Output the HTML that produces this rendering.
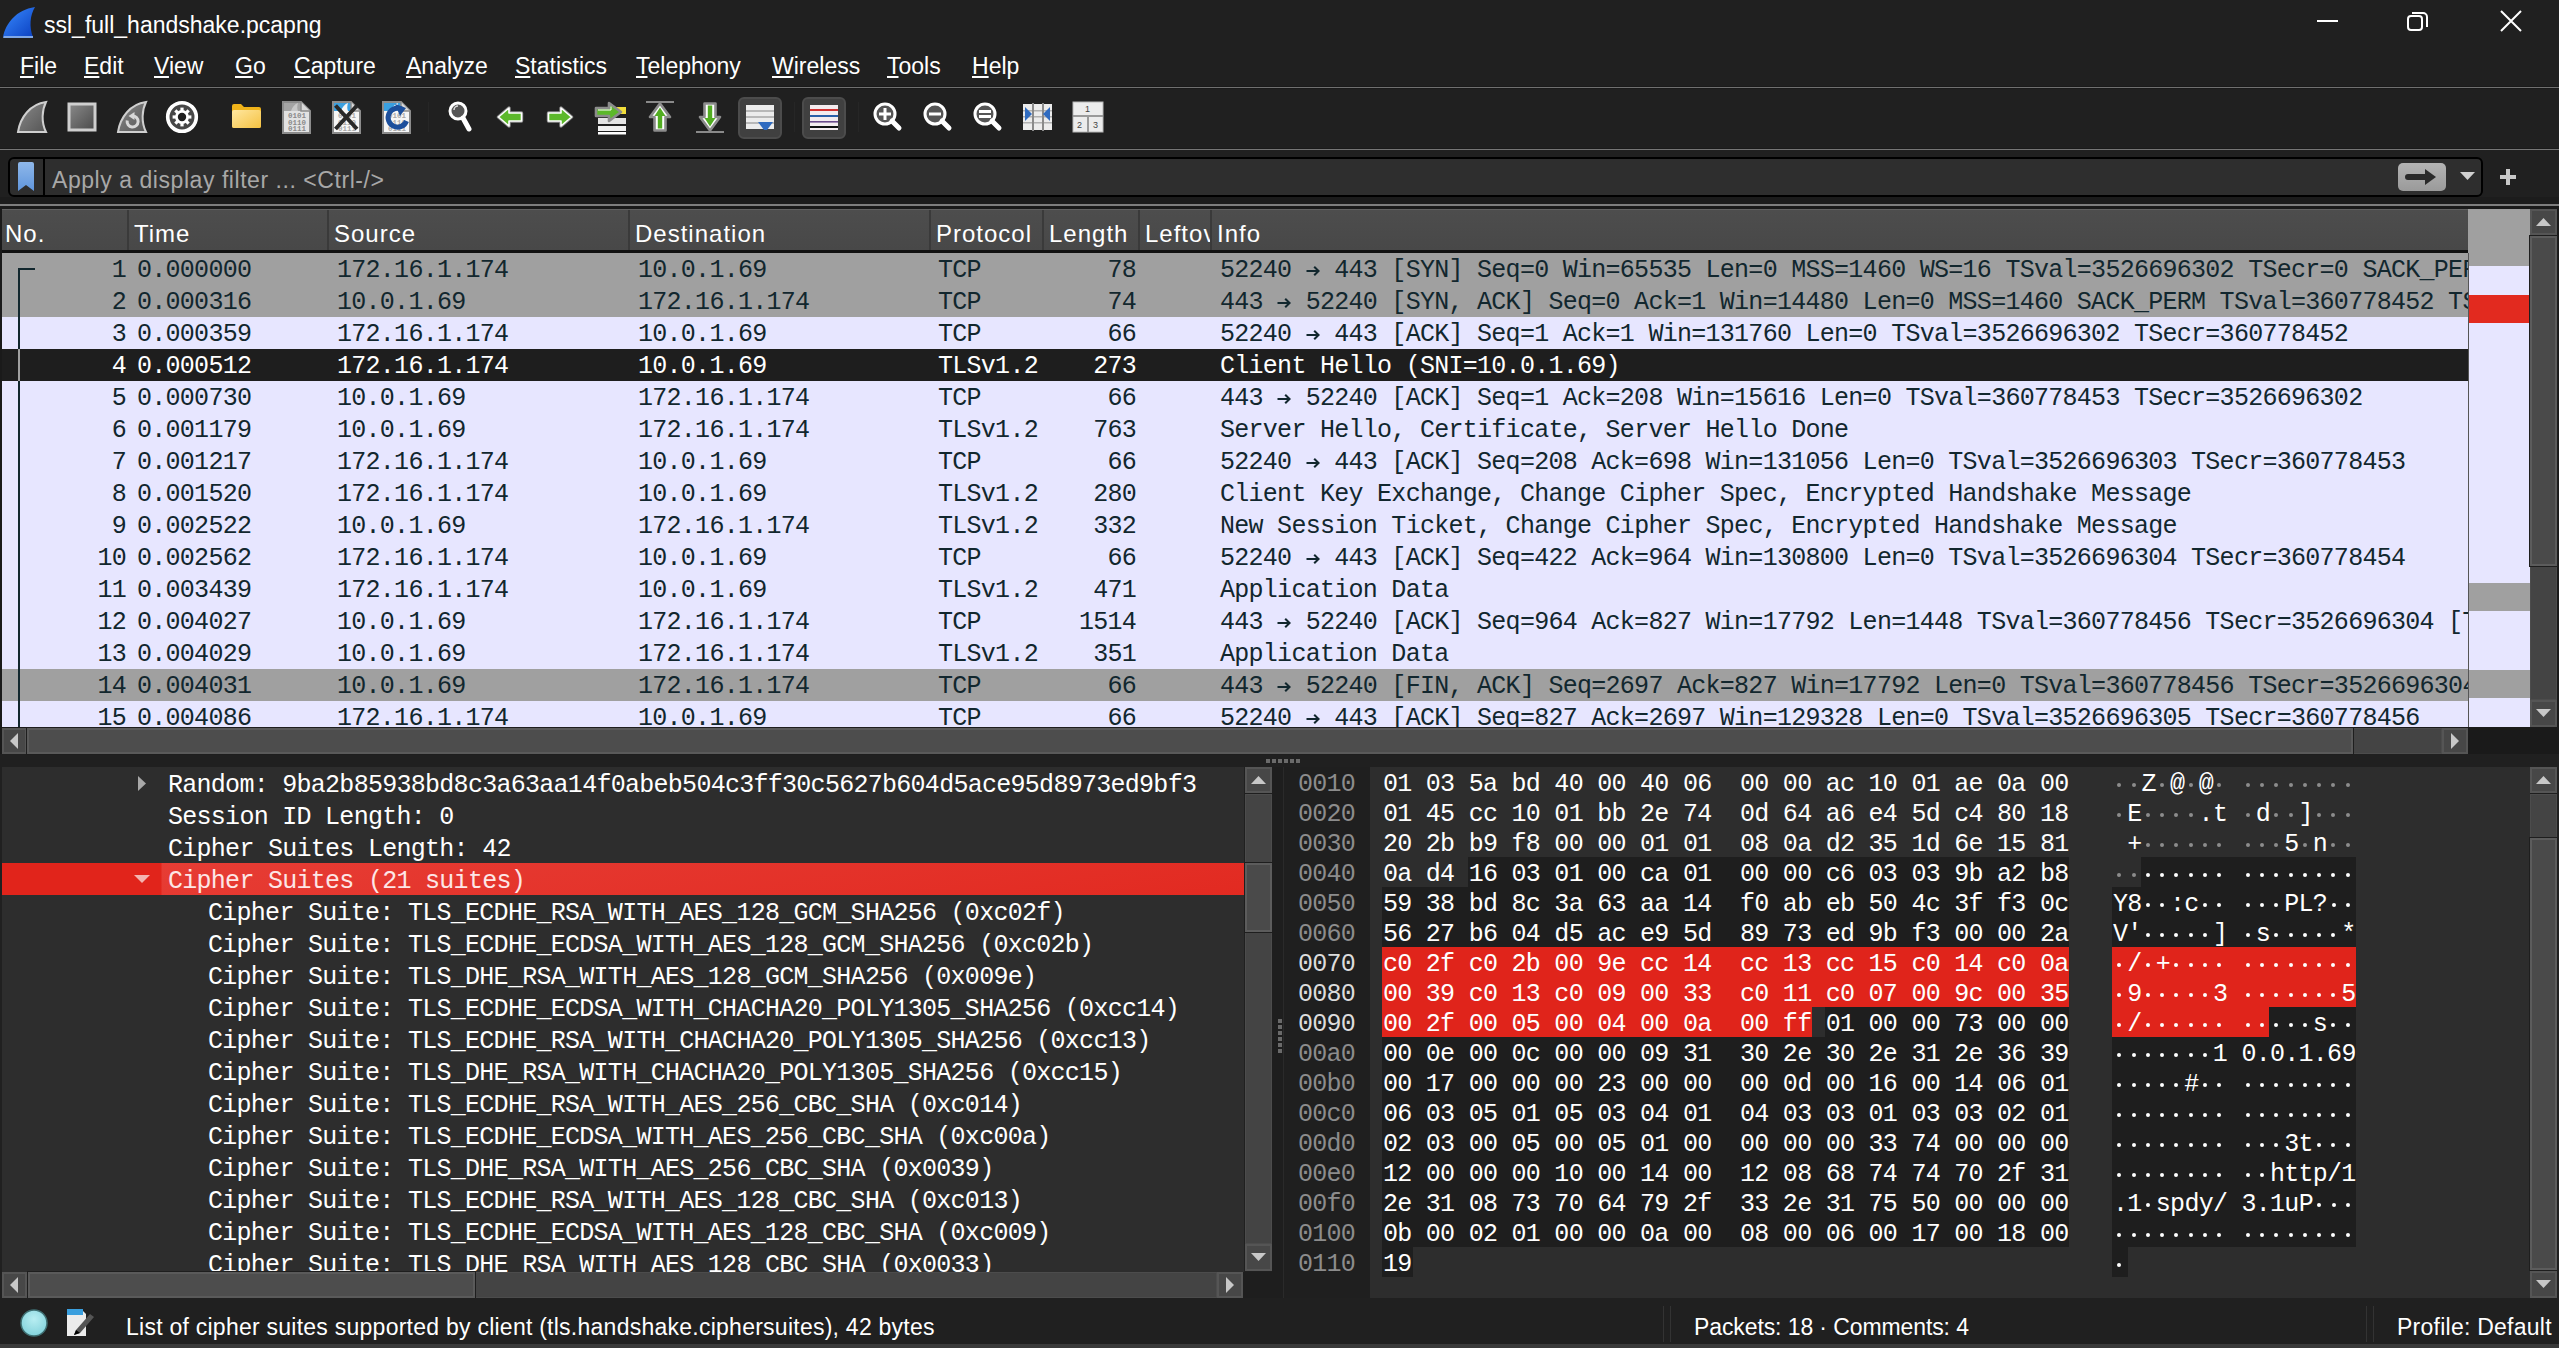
<!DOCTYPE html><html><head><meta charset="utf-8"><title>ssl_full_handshake.pcapng</title>
<style>
*{box-sizing:border-box}
html,body{margin:0;padding:0;width:2559px;height:1348px;overflow:hidden;background:#202020}
body{position:relative;font-family:'Liberation Sans',sans-serif;color:#fff}
.abs{position:absolute}
.m{font-family:'Liberation Mono',monospace;font-size:25px;letter-spacing:-0.722px;white-space:pre;position:absolute}
.s{font-family:'Liberation Sans',sans-serif;font-size:23px;white-space:pre;position:absolute}
.d{display:inline-block;width:14.28px;height:0;position:relative}
.d::after{content:'';position:absolute;left:4.4px;top:-8.2px;width:4px;height:4px;border-radius:50%;background:currentColor}
.u{text-decoration:underline;text-underline-offset:2px;text-decoration-thickness:2px}
</style></head><body>

<svg class="abs" style="left:2px;top:5px" width="34" height="34" viewBox="0 0 34 34">
<defs><linearGradient id="fin" x1="0" y1="0" x2="1" y2="1"><stop offset="0" stop-color="#3a8cff"/><stop offset="1" stop-color="#0a3fc0"/></linearGradient></defs>
<path d="M1 32 C4 18 14 5 33 2 C28 10 27 22 31 32 Z" fill="url(#fin)"/>
<path d="M2 31 L31 31 L31 33 L1 33 Z" fill="#7fa8e8"/>
</svg>
<div class="s" style="left:44px;top:9px;line-height:32px;font-size:23px;color:#fff">ssl_full_handshake.pcapng</div>
<div class="abs" style="left:2317px;top:20px;width:21px;height:2px;background:#fff"></div>
<svg class="abs" style="left:2406px;top:10px" width="24" height="23" viewBox="0 0 24 23">
<rect x="2" y="6" width="14" height="14" rx="3" fill="none" stroke="#fff" stroke-width="2"/>
<path d="M6 3 H17 a4 4 0 0 1 4 4 V17" fill="none" stroke="#fff" stroke-width="2"/></svg>
<svg class="abs" style="left:2500px;top:10px" width="23" height="23" viewBox="0 0 23 23">
<path d="M1 1 L21 21 M21 1 L1 21" stroke="#fff" stroke-width="2"/></svg>
<div class="s" style="left:20px;top:50px;line-height:32px;color:#fff"><span class="u">F</span>ile</div>
<div class="s" style="left:84px;top:50px;line-height:32px;color:#fff"><span class="u">E</span>dit</div>
<div class="s" style="left:154px;top:50px;line-height:32px;color:#fff"><span class="u">V</span>iew</div>
<div class="s" style="left:235px;top:50px;line-height:32px;color:#fff"><span class="u">G</span>o</div>
<div class="s" style="left:294px;top:50px;line-height:32px;color:#fff"><span class="u">C</span>apture</div>
<div class="s" style="left:406px;top:50px;line-height:32px;color:#fff"><span class="u">A</span>nalyze</div>
<div class="s" style="left:515px;top:50px;line-height:32px;color:#fff"><span class="u">S</span>tatistics</div>
<div class="s" style="left:636px;top:50px;line-height:32px;color:#fff"><span class="u">T</span>elephony</div>
<div class="s" style="left:772px;top:50px;line-height:32px;color:#fff"><span class="u">W</span>ireless</div>
<div class="s" style="left:887px;top:50px;line-height:32px;color:#fff"><span class="u">T</span>ools</div>
<div class="s" style="left:972px;top:50px;line-height:32px;color:#fff"><span class="u">H</span>elp</div>
<div class="abs" style="left:0;top:86px;width:2559px;height:1px;background:#1a1a1a"></div><div class="abs" style="left:0;top:87px;width:2559px;height:1px;background:#707070"></div><div class="abs" style="left:0;top:88px;width:2559px;height:1px;background:#1a1a1a"></div>
<svg class="abs" style="left:16px;top:100px" width="32" height="34" viewBox="0 0 32 34"><defs><linearGradient id="g1" x1="0" y1="0" x2="1" y2="1"><stop offset="0" stop-color="#8a8a8a"/><stop offset="1" stop-color="#555"/></linearGradient></defs><path d="M2 32 C4 18 14 4 30 2 C26 10 25 22 30 32 Z" fill="url(#g1)" stroke="#cfcfcf" stroke-width="2"/></svg>
<svg class="abs" style="left:67px;top:102px" width="30" height="30" viewBox="0 0 30 30"><defs><linearGradient id="g2" x1="0" y1="0" x2="1" y2="1"><stop offset="0" stop-color="#8a8a8a"/><stop offset="1" stop-color="#4a4a4a"/></linearGradient></defs><rect x="2" y="2" width="26" height="26" fill="url(#g2)" stroke="#cfcfcf" stroke-width="3"/></svg>
<svg class="abs" style="left:116px;top:100px" width="32" height="34" viewBox="0 0 32 34"><path d="M2 32 C4 18 14 4 30 2 C26 10 25 22 30 32 Z" fill="url(#g1)" stroke="#cfcfcf" stroke-width="2"/><path d="M16.5 16 A5.5 5.5 0 1 1 11.2 20.5" fill="none" stroke="#d8d8d8" stroke-width="3"/><path d="M18.5 12 L18.5 20 L12.5 16 Z" fill="#d8d8d8"/></svg>
<svg class="abs" style="left:165px;top:100px" width="34" height="34" viewBox="0 0 34 34"><circle cx="17" cy="17" r="14.3" fill="#474747" stroke="#fff" stroke-width="3.6"/><g fill="#fff"><rect x="15.4" y="7.6" width="3.2" height="3.4" transform="rotate(0 17 17)"/><rect x="15.4" y="7.6" width="3.2" height="3.4" transform="rotate(45 17 17)"/><rect x="15.4" y="7.6" width="3.2" height="3.4" transform="rotate(90 17 17)"/><rect x="15.4" y="7.6" width="3.2" height="3.4" transform="rotate(135 17 17)"/><rect x="15.4" y="7.6" width="3.2" height="3.4" transform="rotate(180 17 17)"/><rect x="15.4" y="7.6" width="3.2" height="3.4" transform="rotate(225 17 17)"/><rect x="15.4" y="7.6" width="3.2" height="3.4" transform="rotate(270 17 17)"/><rect x="15.4" y="7.6" width="3.2" height="3.4" transform="rotate(315 17 17)"/></g><circle cx="17" cy="17" r="6.9" fill="#fff"/><circle cx="17" cy="17" r="4.2" fill="#1e1e1e"/></svg>
<svg class="abs" style="left:231px;top:103px" width="31" height="26" viewBox="0 0 31 26"><defs><linearGradient id="gf" x1="0" y1="0" x2="1" y2="1"><stop offset="0" stop-color="#ffe7a0"/><stop offset="1" stop-color="#f5c242"/></linearGradient></defs><path d="M1 3 a2 2 0 0 1 2-2 H10 L13 4 H28 a2 2 0 0 1 2 2 V23 a2 2 0 0 1-2 2 H3 a2 2 0 0 1-2-2Z" fill="#f0b31a"/><rect x="1" y="7" width="29" height="18" rx="2" fill="url(#gf)"/></svg>
<svg class="abs" style="left:281px;top:100px" width="30" height="34" viewBox="0 0 30 34"><path d="M2 2 H20 L29 11 V33 H2 Z" fill="#e2e2e2" stroke="#8c8c8c" stroke-width="2"/><rect x="3" y="3" width="17" height="8" fill="#a4a4a4"/><path d="M10 11 C11 7 14 4 17 3 C16 6 16 9 17 11Z" fill="#c8c8c8"/><path d="M20 2 V11 H29" fill="#d8d8d8" stroke="#8c8c8c" stroke-width="1.5"/><g font-family="Liberation Mono" font-size="7.5" font-weight="bold" fill="#8a8a8a"><text x="7" y="18">0101</text><text x="7" y="24.5">0110</text><text x="7" y="31">0111</text></g></svg>
<svg class="abs" style="left:331px;top:100px" width="30" height="34" viewBox="0 0 30 34"><path d="M2 2 H20 L29 11 V33 H2 Z" fill="#f6f6f6" stroke="#8c8c8c" stroke-width="2"/><rect x="3" y="3" width="17" height="8" fill="#3aa0e0"/><path d="M10 11 C11 7 14 4 17 3 C16 6 16 9 17 11Z" fill="#f6f6f6"/><path d="M20 2 V11 H29" fill="#d8d8d8" stroke="#8c8c8c" stroke-width="1.5"/><g font-family="Liberation Mono" font-size="7.5" font-weight="bold" fill="#a8a8a8"><text x="7" y="18">0101</text><text x="7" y="24.5">0110</text><text x="7" y="31">0111</text></g><path d="M4.5 5.5 L26 29 M26 5.5 L4.5 29" stroke="#282828" stroke-width="4"/></svg>
<svg class="abs" style="left:381px;top:100px" width="30" height="34" viewBox="0 0 30 34"><path d="M2 2 H20 L29 11 V33 H2 Z" fill="#f6f6f6" stroke="#8c8c8c" stroke-width="2"/><rect x="3" y="3" width="17" height="8" fill="#3aa0e0"/><path d="M10 11 C11 7 14 4 17 3 C16 6 16 9 17 11Z" fill="#f6f6f6"/><path d="M20 2 V11 H29" fill="#d8d8d8" stroke="#8c8c8c" stroke-width="1.5"/><g font-family="Liberation Mono" font-size="7.5" font-weight="bold" fill="#a8a8a8"><text x="7" y="18">0101</text><text x="7" y="24.5">0110</text><text x="7" y="31">0111</text></g><path d="M21.5 9.5 A9.5 9.5 0 1 0 25.5 21" fill="none" stroke="#1c4f9c" stroke-width="5"/><path d="M14 4 L25 8 L19 16 Z" fill="#1c4f9c"/></svg>
<div class="abs" style="left:428px;top:102px;width:1px;height:30px;background:#262626"></div>
<svg class="abs" style="left:447px;top:101px" width="26" height="32" viewBox="0 0 26 32"><circle cx="11" cy="10" r="8" fill="#555" stroke="#fff" stroke-width="3"/><path d="M16 17 L22 28" stroke="#fff" stroke-width="5" stroke-linecap="round"/><path d="M7 9 a4 4 0 0 1 4-4" stroke="#ddd" stroke-width="1.5" fill="none"/></svg>
<svg class="abs" style="left:496px;top:106px" width="28" height="23" viewBox="0 0 28 23"><path d="M2.5 11 L13 2 V7 H25.5 V15 H13 V20 Z" fill="#8c8c8c" stroke="#8c8c8c" stroke-width="3.4" stroke-linejoin="round"/><path d="M2.5 11 L13 2 V7 H25.5 V15 H13 V20 Z" fill="#5cb82a" stroke="#fff" stroke-width="1.6" stroke-linejoin="round"/></svg>
<svg class="abs" style="left:546px;top:106px" width="28" height="23" viewBox="0 0 28 23"><path d="M25.5 11 L15 2 V7 H2.5 V15 H15 V20 Z" fill="#8c8c8c" stroke="#8c8c8c" stroke-width="3.4" stroke-linejoin="round"/><path d="M25.5 11 L15 2 V7 H2.5 V15 H15 V20 Z" fill="#5cb82a" stroke="#fff" stroke-width="1.6" stroke-linejoin="round"/></svg>
<svg class="abs" style="left:594px;top:101px" width="34" height="34" viewBox="0 0 34 34"><rect x="4" y="6" width="28" height="7" fill="#f2de3a"/><rect x="4" y="17" width="28" height="6" fill="#e4e4e4"/><rect x="4" y="25" width="28" height="5" fill="#f0f0f0"/><rect x="4" y="31" width="28" height="2.5" fill="#fff"/><path d="M2 7 H15 V2 L27 11 L15 20 V15 H2 Z" fill="#5cb82a" stroke="#8c8c8c" stroke-width="2.6" stroke-linejoin="round"/><path d="M4 9 H17 V5.5" fill="none" stroke="#fff" stroke-width="1"/></svg>
<svg class="abs" style="left:645px;top:100px" width="30" height="34" viewBox="0 0 30 34"><rect x="1" y="1" width="28" height="2" fill="#8a8a8a"/><path d="M15 3.5 L25 17 H20.5 V30.5 H9.5 V17 H5 Z" fill="#fff" stroke="#8c8c8c" stroke-width="2.6" stroke-linejoin="round"/><path d="M15 7.5 L20.5 16 H17.2 V28.5 H12.8 V16 H9.5 Z" fill="#52ad22"/></svg>
<svg class="abs" style="left:695px;top:100px" width="30" height="34" viewBox="0 0 30 34"><rect x="1" y="31" width="28" height="2" fill="#8a8a8a"/><path d="M15 30.5 L25 17 H20.5 V3.5 H9.5 V17 H5 Z" fill="#fff" stroke="#8c8c8c" stroke-width="2.6" stroke-linejoin="round"/><path d="M15 26.5 L20.5 18 H17.2 V5.5 H12.8 V18 H9.5 Z" fill="#52ad22"/></svg>
<div class="abs" style="left:738px;top:97px;width:44px;height:42px;border-radius:6px;background:#404040;border:2px solid #4c4c4c"></div>
<svg class="abs" style="left:746px;top:105px" width="28" height="25" viewBox="0 0 28 25"><rect x="0" y="0" width="28" height="24" fill="#ececec"/><rect x="0" y="5" width="28" height="2" fill="#b8b8b8"/><rect x="0" y="11" width="28" height="2" fill="#b8b8b8"/><rect x="0" y="17" width="28" height="2" fill="#b8b8b8"/><path d="M12 17 H27 L21 25 H18 Z" fill="#2f6bc0"/></svg>
<div class="abs" style="left:794px;top:102px;width:1px;height:30px;background:#262626"></div>
<div class="abs" style="left:802px;top:97px;width:44px;height:42px;border-radius:6px;background:#404040;border:2px solid #4c4c4c"></div>
<svg class="abs" style="left:810px;top:105px" width="28" height="25" viewBox="0 0 28 25"><rect x="0" y="0" width="28" height="25" fill="#f4ecef"/><rect x="0" y="4" width="28" height="2" fill="#d03030"/><rect x="0" y="10" width="28" height="2" fill="#2a5fa8"/><rect x="0" y="16" width="28" height="1.6" fill="#6a4a8a"/><rect x="0" y="21" width="28" height="2" fill="#111"/></svg>
<div class="abs" style="left:858px;top:102px;width:1px;height:30px;background:#262626"></div>
<svg class="abs" style="left:873px;top:102px" width="30" height="32" viewBox="0 0 30 32"><circle cx="12" cy="12" r="10" fill="#555" stroke="#fff" stroke-width="3"/><path d="M19 19 L26 26" stroke="#fff" stroke-width="5" stroke-linecap="round"/><path d="M12 6 V18 M6 12 H18" stroke="#fff" stroke-width="3"/></svg>
<svg class="abs" style="left:923px;top:102px" width="30" height="32" viewBox="0 0 30 32"><circle cx="12" cy="12" r="10" fill="#555" stroke="#fff" stroke-width="3"/><path d="M19 19 L26 26" stroke="#fff" stroke-width="5" stroke-linecap="round"/><path d="M6 12 H18" stroke="#fff" stroke-width="3"/></svg>
<svg class="abs" style="left:973px;top:102px" width="30" height="32" viewBox="0 0 30 32"><circle cx="12" cy="12" r="10" fill="#555" stroke="#fff" stroke-width="3"/><path d="M19 19 L26 26" stroke="#fff" stroke-width="5" stroke-linecap="round"/><path d="M6 9.5 H18 M6 14.5 H18" stroke="#fff" stroke-width="3"/></svg>
<svg class="abs" style="left:1023px;top:103px" width="30" height="28" viewBox="0 0 30 28"><rect x="0" y="1" width="29" height="26" fill="#ececec"/><rect x="0" y="7" width="29" height="1.5" fill="#b0b0b0"/><rect x="0" y="13" width="29" height="1.5" fill="#b0b0b0"/><rect x="0" y="19" width="29" height="1.5" fill="#b0b0b0"/><rect x="9" y="0" width="2" height="28" fill="#8a8a8a"/><rect x="19" y="0" width="2" height="28" fill="#8a8a8a"/><path d="M2 4 L9 11 L2 18 Z" fill="#2f6bc0"/><path d="M27 4 L20 11 L27 18 Z" fill="#2f6bc0"/></svg>
<svg class="abs" style="left:1072px;top:101px" width="32" height="32" viewBox="0 0 32 32"><rect x="1" y="1" width="30" height="30" fill="#ececec" stroke="#b8b8b8"/><rect x="1" y="14" width="30" height="2" fill="#9a9a9a"/><rect x="15" y="15" width="2" height="16" fill="#9a9a9a"/><text x="13" y="11" font-family="Liberation Sans" font-size="9" fill="#444">1</text><text x="5" y="27" font-family="Liberation Sans" font-size="9" fill="#444">2</text><text x="21" y="27" font-family="Liberation Sans" font-size="9" fill="#444">3</text></svg>
<div class="abs" style="left:0;top:148px;width:2559px;height:1px;background:#1a1a1a"></div><div class="abs" style="left:0;top:149px;width:2559px;height:1px;background:#767676"></div>
<div class="abs" style="left:8px;top:157px;width:2475px;height:40px;border:2px solid #000;border-radius:6px;background:#2e2e2e"></div>
<div class="abs" style="left:43px;top:159px;width:2px;height:36px;background:#000"></div>
<svg class="abs" style="left:17px;top:162px" width="18" height="30" viewBox="0 0 18 30"><defs><linearGradient id="gb" x1="0" y1="0" x2="0" y2="1"><stop offset="0" stop-color="#8fb8ea"/><stop offset="1" stop-color="#5f95dc"/></linearGradient></defs><path d="M1 2 a2 2 0 0 1 2-2 H15 a2 2 0 0 1 2 2 V29 L9 23 L1 29 Z" fill="url(#gb)"/></svg>
<div class="s" style="left:52px;top:164px;line-height:32px;color:#a8a8a8;letter-spacing:0.55px">Apply a display filter ... &lt;Ctrl-/&gt;</div>
<div class="abs" style="left:2398px;top:163px;width:48px;height:28px;border-radius:5px;background:linear-gradient(#b4b4b4,#9a9a9a)"></div>
<svg class="abs" style="left:2405px;top:167px" width="34" height="20" viewBox="0 0 34 20"><path d="M3 7 H20 V2 L31 10 L20 18 V13 H3 a3 3 0 0 1 0-6Z" fill="#2a2a2a"/></svg>
<svg class="abs" style="left:2460px;top:172px" width="16" height="9" viewBox="0 0 16 9"><path d="M0 0 H15 L7.5 8 Z" fill="#d0d0d0"/></svg>
<svg class="abs" style="left:2499px;top:168px" width="18" height="18" viewBox="0 0 18 18"><path d="M9 1 V17 M1 9 H17" stroke="#c8c8c8" stroke-width="4"/></svg>
<div class="abs" style="left:0;top:197px;width:2559px;height:7px;background:#1c1c1c"></div><div class="abs" style="left:0;top:204px;width:2559px;height:2px;background:#7e7e7e"></div>
<div class="abs" style="left:0;top:206px;width:2559px;height:548px;background:#1a1a1a"></div>
<div class="abs" style="left:2px;top:209px;width:2466px;height:41px;background:linear-gradient(#4d4d4d,#484848);border-top:1px solid #626262"></div>
<div class="s" style="left:5px;top:218px;line-height:32px;font-size:24px;letter-spacing:1px;color:#fff;overflow:hidden;width:122px">No.</div>
<div class="abs" style="left:127px;top:210px;width:2px;height:40px;background:#3a3a3a"></div>
<div class="s" style="left:134px;top:218px;line-height:32px;font-size:24px;letter-spacing:1px;color:#fff;overflow:hidden;width:193px">Time</div>
<div class="abs" style="left:327px;top:210px;width:2px;height:40px;background:#3a3a3a"></div>
<div class="s" style="left:334px;top:218px;line-height:32px;font-size:24px;letter-spacing:1px;color:#fff;overflow:hidden;width:294px">Source</div>
<div class="abs" style="left:628px;top:210px;width:2px;height:40px;background:#3a3a3a"></div>
<div class="s" style="left:635px;top:218px;line-height:32px;font-size:24px;letter-spacing:1px;color:#fff;overflow:hidden;width:294px">Destination</div>
<div class="abs" style="left:929px;top:210px;width:2px;height:40px;background:#3a3a3a"></div>
<div class="s" style="left:936px;top:218px;line-height:32px;font-size:24px;letter-spacing:1px;color:#fff;overflow:hidden;width:106px">Protocol</div>
<div class="abs" style="left:1042px;top:210px;width:2px;height:40px;background:#3a3a3a"></div>
<div class="s" style="left:1049px;top:218px;line-height:32px;font-size:24px;letter-spacing:1px;color:#fff;overflow:hidden;width:89px">Length</div>
<div class="abs" style="left:1138px;top:210px;width:2px;height:40px;background:#3a3a3a"></div>
<div class="s" style="left:1145px;top:218px;line-height:32px;font-size:24px;letter-spacing:1px;color:#fff;overflow:hidden;width:65px">Leftov</div>
<div class="abs" style="left:1210px;top:210px;width:2px;height:40px;background:#3a3a3a"></div>
<div class="s" style="left:1217px;top:218px;line-height:32px;font-size:24px;letter-spacing:1px;color:#fff;overflow:hidden;width:1250px">Info</div>
<div class="abs" style="left:2px;top:250px;width:2466px;height:3px;background:#111"></div>
<div class="abs" style="left:2px;top:253px;width:2466px;height:474px;overflow:hidden">
<div class="abs" style="left:0;top:0px;width:2466px;height:32px;background:#a0a0a0;color:#12272e">
<div class="m" style="left:0;width:124px;text-align:right;top:2px;line-height:32px">1</div>
<div class="m" style="left:135px;top:2px;line-height:32px">0.000000</div>
<div class="m" style="left:335px;top:2px;line-height:32px">172.16.1.174</div>
<div class="m" style="left:636px;top:2px;line-height:32px">10.0.1.69</div>
<div class="m" style="left:936px;top:2px;line-height:32px">TCP</div>
<div class="m" style="left:1000px;width:134px;text-align:right;top:2px;line-height:32px">78</div>
<div class="m" style="left:1218px;top:2px;line-height:32px">52240 <span style="display:inline-block;width:14.28px;height:0;position:relative"><svg style="position:absolute;left:0;top:-11px" width="14" height="10" viewBox="0 0 14 10"><path d="M0.5 5 H12.5 M8.2 0.8 L12.6 5 L8.2 9.2" stroke="currentColor" stroke-width="2.1" fill="none"/></svg></span> 443 [SYN] Seq=0 Win=65535 Len=0 MSS=1460 WS=16 TSval=3526696302 TSecr=0 SACK_PERM</div>
</div>
<div class="abs" style="left:0;top:32px;width:2466px;height:32px;background:#a0a0a0;color:#12272e">
<div class="m" style="left:0;width:124px;text-align:right;top:2px;line-height:32px">2</div>
<div class="m" style="left:135px;top:2px;line-height:32px">0.000316</div>
<div class="m" style="left:335px;top:2px;line-height:32px">10.0.1.69</div>
<div class="m" style="left:636px;top:2px;line-height:32px">172.16.1.174</div>
<div class="m" style="left:936px;top:2px;line-height:32px">TCP</div>
<div class="m" style="left:1000px;width:134px;text-align:right;top:2px;line-height:32px">74</div>
<div class="m" style="left:1218px;top:2px;line-height:32px">443 <span style="display:inline-block;width:14.28px;height:0;position:relative"><svg style="position:absolute;left:0;top:-11px" width="14" height="10" viewBox="0 0 14 10"><path d="M0.5 5 H12.5 M8.2 0.8 L12.6 5 L8.2 9.2" stroke="currentColor" stroke-width="2.1" fill="none"/></svg></span> 52240 [SYN, ACK] Seq=0 Ack=1 Win=14480 Len=0 MSS=1460 SACK_PERM TSval=360778452 TSecr=3526696302 WS=16</div>
</div>
<div class="abs" style="left:0;top:64px;width:2466px;height:32px;background:#e7e6ff;color:#12272e">
<div class="m" style="left:0;width:124px;text-align:right;top:2px;line-height:32px">3</div>
<div class="m" style="left:135px;top:2px;line-height:32px">0.000359</div>
<div class="m" style="left:335px;top:2px;line-height:32px">172.16.1.174</div>
<div class="m" style="left:636px;top:2px;line-height:32px">10.0.1.69</div>
<div class="m" style="left:936px;top:2px;line-height:32px">TCP</div>
<div class="m" style="left:1000px;width:134px;text-align:right;top:2px;line-height:32px">66</div>
<div class="m" style="left:1218px;top:2px;line-height:32px">52240 <span style="display:inline-block;width:14.28px;height:0;position:relative"><svg style="position:absolute;left:0;top:-11px" width="14" height="10" viewBox="0 0 14 10"><path d="M0.5 5 H12.5 M8.2 0.8 L12.6 5 L8.2 9.2" stroke="currentColor" stroke-width="2.1" fill="none"/></svg></span> 443 [ACK] Seq=1 Ack=1 Win=131760 Len=0 TSval=3526696302 TSecr=360778452</div>
</div>
<div class="abs" style="left:0;top:96px;width:2466px;height:32px;background:#1e1e1e;color:#fff">
<div class="m" style="left:0;width:124px;text-align:right;top:2px;line-height:32px">4</div>
<div class="m" style="left:135px;top:2px;line-height:32px">0.000512</div>
<div class="m" style="left:335px;top:2px;line-height:32px">172.16.1.174</div>
<div class="m" style="left:636px;top:2px;line-height:32px">10.0.1.69</div>
<div class="m" style="left:936px;top:2px;line-height:32px">TLSv1.2</div>
<div class="m" style="left:1000px;width:134px;text-align:right;top:2px;line-height:32px">273</div>
<div class="m" style="left:1218px;top:2px;line-height:32px">Client Hello (SNI=10.0.1.69)</div>
</div>
<div class="abs" style="left:0;top:128px;width:2466px;height:32px;background:#e7e6ff;color:#12272e">
<div class="m" style="left:0;width:124px;text-align:right;top:2px;line-height:32px">5</div>
<div class="m" style="left:135px;top:2px;line-height:32px">0.000730</div>
<div class="m" style="left:335px;top:2px;line-height:32px">10.0.1.69</div>
<div class="m" style="left:636px;top:2px;line-height:32px">172.16.1.174</div>
<div class="m" style="left:936px;top:2px;line-height:32px">TCP</div>
<div class="m" style="left:1000px;width:134px;text-align:right;top:2px;line-height:32px">66</div>
<div class="m" style="left:1218px;top:2px;line-height:32px">443 <span style="display:inline-block;width:14.28px;height:0;position:relative"><svg style="position:absolute;left:0;top:-11px" width="14" height="10" viewBox="0 0 14 10"><path d="M0.5 5 H12.5 M8.2 0.8 L12.6 5 L8.2 9.2" stroke="currentColor" stroke-width="2.1" fill="none"/></svg></span> 52240 [ACK] Seq=1 Ack=208 Win=15616 Len=0 TSval=360778453 TSecr=3526696302</div>
</div>
<div class="abs" style="left:0;top:160px;width:2466px;height:32px;background:#e7e6ff;color:#12272e">
<div class="m" style="left:0;width:124px;text-align:right;top:2px;line-height:32px">6</div>
<div class="m" style="left:135px;top:2px;line-height:32px">0.001179</div>
<div class="m" style="left:335px;top:2px;line-height:32px">10.0.1.69</div>
<div class="m" style="left:636px;top:2px;line-height:32px">172.16.1.174</div>
<div class="m" style="left:936px;top:2px;line-height:32px">TLSv1.2</div>
<div class="m" style="left:1000px;width:134px;text-align:right;top:2px;line-height:32px">763</div>
<div class="m" style="left:1218px;top:2px;line-height:32px">Server Hello, Certificate, Server Hello Done</div>
</div>
<div class="abs" style="left:0;top:192px;width:2466px;height:32px;background:#e7e6ff;color:#12272e">
<div class="m" style="left:0;width:124px;text-align:right;top:2px;line-height:32px">7</div>
<div class="m" style="left:135px;top:2px;line-height:32px">0.001217</div>
<div class="m" style="left:335px;top:2px;line-height:32px">172.16.1.174</div>
<div class="m" style="left:636px;top:2px;line-height:32px">10.0.1.69</div>
<div class="m" style="left:936px;top:2px;line-height:32px">TCP</div>
<div class="m" style="left:1000px;width:134px;text-align:right;top:2px;line-height:32px">66</div>
<div class="m" style="left:1218px;top:2px;line-height:32px">52240 <span style="display:inline-block;width:14.28px;height:0;position:relative"><svg style="position:absolute;left:0;top:-11px" width="14" height="10" viewBox="0 0 14 10"><path d="M0.5 5 H12.5 M8.2 0.8 L12.6 5 L8.2 9.2" stroke="currentColor" stroke-width="2.1" fill="none"/></svg></span> 443 [ACK] Seq=208 Ack=698 Win=131056 Len=0 TSval=3526696303 TSecr=360778453</div>
</div>
<div class="abs" style="left:0;top:224px;width:2466px;height:32px;background:#e7e6ff;color:#12272e">
<div class="m" style="left:0;width:124px;text-align:right;top:2px;line-height:32px">8</div>
<div class="m" style="left:135px;top:2px;line-height:32px">0.001520</div>
<div class="m" style="left:335px;top:2px;line-height:32px">172.16.1.174</div>
<div class="m" style="left:636px;top:2px;line-height:32px">10.0.1.69</div>
<div class="m" style="left:936px;top:2px;line-height:32px">TLSv1.2</div>
<div class="m" style="left:1000px;width:134px;text-align:right;top:2px;line-height:32px">280</div>
<div class="m" style="left:1218px;top:2px;line-height:32px">Client Key Exchange, Change Cipher Spec, Encrypted Handshake Message</div>
</div>
<div class="abs" style="left:0;top:256px;width:2466px;height:32px;background:#e7e6ff;color:#12272e">
<div class="m" style="left:0;width:124px;text-align:right;top:2px;line-height:32px">9</div>
<div class="m" style="left:135px;top:2px;line-height:32px">0.002522</div>
<div class="m" style="left:335px;top:2px;line-height:32px">10.0.1.69</div>
<div class="m" style="left:636px;top:2px;line-height:32px">172.16.1.174</div>
<div class="m" style="left:936px;top:2px;line-height:32px">TLSv1.2</div>
<div class="m" style="left:1000px;width:134px;text-align:right;top:2px;line-height:32px">332</div>
<div class="m" style="left:1218px;top:2px;line-height:32px">New Session Ticket, Change Cipher Spec, Encrypted Handshake Message</div>
</div>
<div class="abs" style="left:0;top:288px;width:2466px;height:32px;background:#e7e6ff;color:#12272e">
<div class="m" style="left:0;width:124px;text-align:right;top:2px;line-height:32px">10</div>
<div class="m" style="left:135px;top:2px;line-height:32px">0.002562</div>
<div class="m" style="left:335px;top:2px;line-height:32px">172.16.1.174</div>
<div class="m" style="left:636px;top:2px;line-height:32px">10.0.1.69</div>
<div class="m" style="left:936px;top:2px;line-height:32px">TCP</div>
<div class="m" style="left:1000px;width:134px;text-align:right;top:2px;line-height:32px">66</div>
<div class="m" style="left:1218px;top:2px;line-height:32px">52240 <span style="display:inline-block;width:14.28px;height:0;position:relative"><svg style="position:absolute;left:0;top:-11px" width="14" height="10" viewBox="0 0 14 10"><path d="M0.5 5 H12.5 M8.2 0.8 L12.6 5 L8.2 9.2" stroke="currentColor" stroke-width="2.1" fill="none"/></svg></span> 443 [ACK] Seq=422 Ack=964 Win=130800 Len=0 TSval=3526696304 TSecr=360778454</div>
</div>
<div class="abs" style="left:0;top:320px;width:2466px;height:32px;background:#e7e6ff;color:#12272e">
<div class="m" style="left:0;width:124px;text-align:right;top:2px;line-height:32px">11</div>
<div class="m" style="left:135px;top:2px;line-height:32px">0.003439</div>
<div class="m" style="left:335px;top:2px;line-height:32px">172.16.1.174</div>
<div class="m" style="left:636px;top:2px;line-height:32px">10.0.1.69</div>
<div class="m" style="left:936px;top:2px;line-height:32px">TLSv1.2</div>
<div class="m" style="left:1000px;width:134px;text-align:right;top:2px;line-height:32px">471</div>
<div class="m" style="left:1218px;top:2px;line-height:32px">Application Data</div>
</div>
<div class="abs" style="left:0;top:352px;width:2466px;height:32px;background:#e7e6ff;color:#12272e">
<div class="m" style="left:0;width:124px;text-align:right;top:2px;line-height:32px">12</div>
<div class="m" style="left:135px;top:2px;line-height:32px">0.004027</div>
<div class="m" style="left:335px;top:2px;line-height:32px">10.0.1.69</div>
<div class="m" style="left:636px;top:2px;line-height:32px">172.16.1.174</div>
<div class="m" style="left:936px;top:2px;line-height:32px">TCP</div>
<div class="m" style="left:1000px;width:134px;text-align:right;top:2px;line-height:32px">1514</div>
<div class="m" style="left:1218px;top:2px;line-height:32px">443 <span style="display:inline-block;width:14.28px;height:0;position:relative"><svg style="position:absolute;left:0;top:-11px" width="14" height="10" viewBox="0 0 14 10"><path d="M0.5 5 H12.5 M8.2 0.8 L12.6 5 L8.2 9.2" stroke="currentColor" stroke-width="2.1" fill="none"/></svg></span> 52240 [ACK] Seq=964 Ack=827 Win=17792 Len=1448 TSval=360778456 TSecr=3526696304 [TCP segment of a reassembled PDU]</div>
</div>
<div class="abs" style="left:0;top:384px;width:2466px;height:32px;background:#e7e6ff;color:#12272e">
<div class="m" style="left:0;width:124px;text-align:right;top:2px;line-height:32px">13</div>
<div class="m" style="left:135px;top:2px;line-height:32px">0.004029</div>
<div class="m" style="left:335px;top:2px;line-height:32px">10.0.1.69</div>
<div class="m" style="left:636px;top:2px;line-height:32px">172.16.1.174</div>
<div class="m" style="left:936px;top:2px;line-height:32px">TLSv1.2</div>
<div class="m" style="left:1000px;width:134px;text-align:right;top:2px;line-height:32px">351</div>
<div class="m" style="left:1218px;top:2px;line-height:32px">Application Data</div>
</div>
<div class="abs" style="left:0;top:416px;width:2466px;height:32px;background:#a0a0a0;color:#12272e">
<div class="m" style="left:0;width:124px;text-align:right;top:2px;line-height:32px">14</div>
<div class="m" style="left:135px;top:2px;line-height:32px">0.004031</div>
<div class="m" style="left:335px;top:2px;line-height:32px">10.0.1.69</div>
<div class="m" style="left:636px;top:2px;line-height:32px">172.16.1.174</div>
<div class="m" style="left:936px;top:2px;line-height:32px">TCP</div>
<div class="m" style="left:1000px;width:134px;text-align:right;top:2px;line-height:32px">66</div>
<div class="m" style="left:1218px;top:2px;line-height:32px">443 <span style="display:inline-block;width:14.28px;height:0;position:relative"><svg style="position:absolute;left:0;top:-11px" width="14" height="10" viewBox="0 0 14 10"><path d="M0.5 5 H12.5 M8.2 0.8 L12.6 5 L8.2 9.2" stroke="currentColor" stroke-width="2.1" fill="none"/></svg></span> 52240 [FIN, ACK] Seq=2697 Ack=827 Win=17792 Len=0 TSval=360778456 TSecr=3526696304</div>
</div>
<div class="abs" style="left:0;top:448px;width:2466px;height:32px;background:#e7e6ff;color:#12272e">
<div class="m" style="left:0;width:124px;text-align:right;top:2px;line-height:32px">15</div>
<div class="m" style="left:135px;top:2px;line-height:32px">0.004086</div>
<div class="m" style="left:335px;top:2px;line-height:32px">172.16.1.174</div>
<div class="m" style="left:636px;top:2px;line-height:32px">10.0.1.69</div>
<div class="m" style="left:936px;top:2px;line-height:32px">TCP</div>
<div class="m" style="left:1000px;width:134px;text-align:right;top:2px;line-height:32px">66</div>
<div class="m" style="left:1218px;top:2px;line-height:32px">52240 <span style="display:inline-block;width:14.28px;height:0;position:relative"><svg style="position:absolute;left:0;top:-11px" width="14" height="10" viewBox="0 0 14 10"><path d="M0.5 5 H12.5 M8.2 0.8 L12.6 5 L8.2 9.2" stroke="currentColor" stroke-width="2.1" fill="none"/></svg></span> 443 [ACK] Seq=827 Ack=2697 Win=129328 Len=0 TSval=3526696305 TSecr=360778456</div>
</div>
<div class="abs" style="left:16px;top:16px;width:2px;height:460px;background:#12272e"></div>
<div class="abs" style="left:16px;top:15px;width:17px;height:2px;background:#12272e"></div>
<div class="abs" style="left:16px;top:96px;width:2px;height:32px;background:#a0a0a0"></div>
</div>
<div class="abs" style="left:2468px;top:209px;width:62px;height:57px;background:#a0a0a0"></div>
<div class="abs" style="left:2468px;top:266px;width:62px;height:29px;background:#e7e6ff"></div>
<div class="abs" style="left:2468px;top:295px;width:62px;height:28px;background:#e22a1f"></div>
<div class="abs" style="left:2468px;top:323px;width:62px;height:260px;background:#e7e6ff"></div>
<div class="abs" style="left:2468px;top:583px;width:62px;height:28px;background:#a0a0a0"></div>
<div class="abs" style="left:2468px;top:611px;width:62px;height:59px;background:#e7e6ff"></div>
<div class="abs" style="left:2468px;top:670px;width:62px;height:28px;background:#a0a0a0"></div>
<div class="abs" style="left:2468px;top:698px;width:62px;height:29px;background:#e7e6ff"></div>
<div class="abs" style="left:2468px;top:253px;width:1px;height:474px;background:#555"></div>
<div class="abs" style="left:2530px;top:209px;width:27px;height:518px;background:#1e1e1e"></div>
<div class="abs" style="left:2530px;top:209px;width:27px;height:26px;background:#474747;border:2px solid #555"></div>
<svg class="abs" style="left:2536px;top:218px" width="15" height="8" viewBox="0 0 15 8"><path d="M0 8 L7.5 0 L15 8Z" fill="#c8c8c8"/></svg>
<div class="abs" style="left:2530px;top:236px;width:27px;height:464px;background:#444;border:1px solid #4c4c4c"></div>
<div class="abs" style="left:2530px;top:236px;width:27px;height:330px;background:#4a4a4a;border:2px solid #5c5c5c;box-shadow:0 0 0 1px #1e1e1e"></div>
<div class="abs" style="left:2530px;top:700px;width:27px;height:27px;background:#474747;border:2px solid #555"></div>
<svg class="abs" style="left:2536px;top:709px" width="15" height="8" viewBox="0 0 15 8"><path d="M0 0 L15 0 L7.5 8Z" fill="#c8c8c8"/></svg>
<div class="abs" style="left:2px;top:728px;width:2466px;height:26px;background:#1e1e1e"></div>
<div class="abs" style="left:28px;top:728px;width:2414px;height:26px;background:#444;border:1px solid #4c4c4c"></div>
<div class="abs" style="left:2px;top:728px;width:25px;height:26px;background:#474747;border:2px solid #555"></div>
<svg class="abs" style="left:10px;top:733px" width="8" height="16" viewBox="0 0 8 16"><path d="M8 0 L0 8 L8 16Z" fill="#c8c8c8"/></svg>
<div class="abs" style="left:27px;top:728px;width:2326px;height:26px;background:#4d4d4d;border:2px solid #5a5a5a;box-shadow:0 0 0 1px #1e1e1e"></div>
<div class="abs" style="left:2442px;top:728px;width:26px;height:26px;background:#474747;border:2px solid #555"></div>
<svg class="abs" style="left:2451px;top:733px" width="8" height="16" viewBox="0 0 8 16"><path d="M0 0 L8 8 L0 16Z" fill="#c8c8c8"/></svg>
<div class="abs" style="left:1266px;top:759px;width:4px;height:4px;background:#6a6a6a"></div>
<div class="abs" style="left:1272px;top:759px;width:4px;height:4px;background:#6a6a6a"></div>
<div class="abs" style="left:1278px;top:759px;width:4px;height:4px;background:#6a6a6a"></div>
<div class="abs" style="left:1284px;top:759px;width:4px;height:4px;background:#6a6a6a"></div>
<div class="abs" style="left:1290px;top:759px;width:4px;height:4px;background:#6a6a6a"></div>
<div class="abs" style="left:1296px;top:759px;width:4px;height:4px;background:#6a6a6a"></div>
<div class="abs" style="left:2px;top:767px;width:1242px;height:505px;background:#2d2d2d;overflow:hidden">
<svg class="abs" style="left:136px;top:9px" width="8" height="15" viewBox="0 0 8 15"><path d="M0 0 L8 7.5 L0 15Z" fill="#a8a8a8"/></svg>
<div class="m" style="left:166px;top:3px;line-height:32px;color:#fff">Random: 9ba2b85938bd8c3a63aa14f0abeb504c3ff30c5627b604d5ace95d8973ed9bf3</div>
<div class="m" style="left:166px;top:35px;line-height:32px;color:#fff">Session ID Length: 0</div>
<div class="m" style="left:166px;top:67px;line-height:32px;color:#fff">Cipher Suites Length: 42</div>
<div class="abs" style="left:0;top:96px;width:1243px;height:32px;background:linear-gradient(90deg,#e1241b 0,#e1241b 159px,transparent 160px),linear-gradient(170deg,#e73f37 0,#e22a21 100%)"></div>
<svg class="abs" style="left:132px;top:108px" width="16" height="8" viewBox="0 0 16 8"><path d="M0 0 H16 L8 8Z" fill="#f4b4b0"/></svg>
<div class="m" style="left:166px;top:99px;line-height:32px;color:#fde6e6">Cipher Suites (21 suites)</div>
<div class="m" style="left:206px;top:131px;line-height:32px;color:#fff">Cipher Suite: TLS_ECDHE_RSA_WITH_AES_128_GCM_SHA256 (0xc02f)</div>
<div class="m" style="left:206px;top:163px;line-height:32px;color:#fff">Cipher Suite: TLS_ECDHE_ECDSA_WITH_AES_128_GCM_SHA256 (0xc02b)</div>
<div class="m" style="left:206px;top:195px;line-height:32px;color:#fff">Cipher Suite: TLS_DHE_RSA_WITH_AES_128_GCM_SHA256 (0x009e)</div>
<div class="m" style="left:206px;top:227px;line-height:32px;color:#fff">Cipher Suite: TLS_ECDHE_ECDSA_WITH_CHACHA20_POLY1305_SHA256 (0xcc14)</div>
<div class="m" style="left:206px;top:259px;line-height:32px;color:#fff">Cipher Suite: TLS_ECDHE_RSA_WITH_CHACHA20_POLY1305_SHA256 (0xcc13)</div>
<div class="m" style="left:206px;top:291px;line-height:32px;color:#fff">Cipher Suite: TLS_DHE_RSA_WITH_CHACHA20_POLY1305_SHA256 (0xcc15)</div>
<div class="m" style="left:206px;top:323px;line-height:32px;color:#fff">Cipher Suite: TLS_ECDHE_RSA_WITH_AES_256_CBC_SHA (0xc014)</div>
<div class="m" style="left:206px;top:355px;line-height:32px;color:#fff">Cipher Suite: TLS_ECDHE_ECDSA_WITH_AES_256_CBC_SHA (0xc00a)</div>
<div class="m" style="left:206px;top:387px;line-height:32px;color:#fff">Cipher Suite: TLS_DHE_RSA_WITH_AES_256_CBC_SHA (0x0039)</div>
<div class="m" style="left:206px;top:419px;line-height:32px;color:#fff">Cipher Suite: TLS_ECDHE_RSA_WITH_AES_128_CBC_SHA (0xc013)</div>
<div class="m" style="left:206px;top:451px;line-height:32px;color:#fff">Cipher Suite: TLS_ECDHE_ECDSA_WITH_AES_128_CBC_SHA (0xc009)</div>
<div class="m" style="left:206px;top:483px;line-height:32px;color:#fff">Cipher Suite: TLS_DHE_RSA_WITH_AES_128_CBC_SHA (0x0033)</div>
</div>
<div class="abs" style="left:1245px;top:767px;width:27px;height:504px;background:#1e1e1e"></div>
<div class="abs" style="left:1245px;top:767px;width:27px;height:26px;background:#474747;border:2px solid #555"></div>
<svg class="abs" style="left:1251px;top:776px" width="15" height="8" viewBox="0 0 15 8"><path d="M0 8 L7.5 0 L15 8Z" fill="#c8c8c8"/></svg>
<div class="abs" style="left:1245px;top:794px;width:27px;height:450px;background:#444;border:1px solid #4c4c4c"></div>
<div class="abs" style="left:1245px;top:863px;width:27px;height:69px;background:#4a4a4a;border:2px solid #5c5c5c;box-shadow:0 0 0 1px #1e1e1e"></div>
<div class="abs" style="left:1245px;top:1244px;width:27px;height:27px;background:#474747;border:2px solid #555"></div>
<svg class="abs" style="left:1251px;top:1253px" width="15" height="8" viewBox="0 0 15 8"><path d="M0 0 L15 0 L7.5 8Z" fill="#c8c8c8"/></svg>
<div class="abs" style="left:2px;top:1272px;width:1241px;height:26px;background:#1e1e1e"></div>
<div class="abs" style="left:28px;top:1272px;width:1189px;height:26px;background:#444;border:1px solid #4c4c4c"></div>
<div class="abs" style="left:2px;top:1272px;width:25px;height:26px;background:#474747;border:2px solid #555"></div>
<svg class="abs" style="left:10px;top:1277px" width="8" height="16" viewBox="0 0 8 16"><path d="M8 0 L0 8 L8 16Z" fill="#c8c8c8"/></svg>
<div class="abs" style="left:28px;top:1272px;width:447px;height:26px;background:#4d4d4d;border:2px solid #5a5a5a;box-shadow:0 0 0 1px #1e1e1e"></div>
<div class="abs" style="left:1217px;top:1272px;width:26px;height:26px;background:#474747;border:2px solid #555"></div>
<svg class="abs" style="left:1226px;top:1277px" width="8" height="16" viewBox="0 0 8 16"><path d="M0 0 L8 8 L0 16Z" fill="#c8c8c8"/></svg>
<div class="abs" style="left:1243px;top:1272px;width:29px;height:26px;background:#1e1e1e"></div>
<div class="abs" style="left:1272px;top:767px;width:11px;height:531px;background:#1e1e1e"></div>
<div class="abs" style="left:1278px;top:1019px;width:4px;height:4px;background:#6a6a6a"></div>
<div class="abs" style="left:1278px;top:1025px;width:4px;height:4px;background:#6a6a6a"></div>
<div class="abs" style="left:1278px;top:1031px;width:4px;height:4px;background:#6a6a6a"></div>
<div class="abs" style="left:1278px;top:1037px;width:4px;height:4px;background:#6a6a6a"></div>
<div class="abs" style="left:1278px;top:1043px;width:4px;height:4px;background:#6a6a6a"></div>
<div class="abs" style="left:1278px;top:1049px;width:4px;height:4px;background:#6a6a6a"></div>
<div class="abs" style="left:1283px;top:767px;width:1247px;height:531px;background:#2d2d2d"></div>
<div class="abs" style="left:1283px;top:767px;width:87px;height:531px;background:#1f1f1f;border-left:1px solid #2a2a2a"></div>
<div class="m" style="left:1298px;top:769px;line-height:32px;color:#8c8c8c">0010</div>
<div class="m" style="left:1383px;top:769px;line-height:32px;color:#fff">01 03 5a bd 40 00 40 06  00 00 ac 10 01 ae 0a 00</div>
<div class="m" style="left:2113px;top:769px;line-height:32px;color:#fff"><span class="d" style="color:#8c8c8c"></span><span class="d" style="color:#8c8c8c"></span>Z<span class="d" style="color:#8c8c8c"></span>@<span class="d" style="color:#8c8c8c"></span>@<span class="d" style="color:#8c8c8c"></span> <span class="d" style="color:#8c8c8c"></span><span class="d" style="color:#8c8c8c"></span><span class="d" style="color:#8c8c8c"></span><span class="d" style="color:#8c8c8c"></span><span class="d" style="color:#8c8c8c"></span><span class="d" style="color:#8c8c8c"></span><span class="d" style="color:#8c8c8c"></span><span class="d" style="color:#8c8c8c"></span></div>
<div class="m" style="left:1298px;top:799px;line-height:32px;color:#8c8c8c">0020</div>
<div class="m" style="left:1383px;top:799px;line-height:32px;color:#fff">01 45 cc 10 01 bb 2e 74  0d 64 a6 e4 5d c4 80 18</div>
<div class="m" style="left:2113px;top:799px;line-height:32px;color:#fff"><span class="d" style="color:#8c8c8c"></span>E<span class="d" style="color:#8c8c8c"></span><span class="d" style="color:#8c8c8c"></span><span class="d" style="color:#8c8c8c"></span><span class="d" style="color:#8c8c8c"></span>.t <span class="d" style="color:#8c8c8c"></span>d<span class="d" style="color:#8c8c8c"></span><span class="d" style="color:#8c8c8c"></span>]<span class="d" style="color:#8c8c8c"></span><span class="d" style="color:#8c8c8c"></span><span class="d" style="color:#8c8c8c"></span></div>
<div class="m" style="left:1298px;top:829px;line-height:32px;color:#8c8c8c">0030</div>
<div class="m" style="left:1383px;top:829px;line-height:32px;color:#fff">20 2b b9 f8 00 00 01 01  08 0a d2 35 1d 6e 15 81</div>
<div class="m" style="left:2113px;top:829px;line-height:32px;color:#fff"> +<span class="d" style="color:#8c8c8c"></span><span class="d" style="color:#8c8c8c"></span><span class="d" style="color:#8c8c8c"></span><span class="d" style="color:#8c8c8c"></span><span class="d" style="color:#8c8c8c"></span><span class="d" style="color:#8c8c8c"></span> <span class="d" style="color:#8c8c8c"></span><span class="d" style="color:#8c8c8c"></span><span class="d" style="color:#8c8c8c"></span>5<span class="d" style="color:#8c8c8c"></span>n<span class="d" style="color:#8c8c8c"></span><span class="d" style="color:#8c8c8c"></span></div>
<div class="m" style="left:1298px;top:859px;line-height:32px;color:#8c8c8c">0040</div>
<div class="abs" style="left:1467.68px;top:857px;width:43.34px;height:30px;background:#1e1e1e"></div>
<div class="abs" style="left:2140.56px;top:857px;width:14.78px;height:30px;background:#1e1e1e"></div>
<div class="abs" style="left:1510.52px;top:857px;width:43.34px;height:30px;background:#1e1e1e"></div>
<div class="abs" style="left:2154.84px;top:857px;width:14.78px;height:30px;background:#1e1e1e"></div>
<div class="abs" style="left:1553.36px;top:857px;width:43.34px;height:30px;background:#1e1e1e"></div>
<div class="abs" style="left:2169.12px;top:857px;width:14.78px;height:30px;background:#1e1e1e"></div>
<div class="abs" style="left:1596.20px;top:857px;width:43.34px;height:30px;background:#1e1e1e"></div>
<div class="abs" style="left:2183.40px;top:857px;width:14.78px;height:30px;background:#1e1e1e"></div>
<div class="abs" style="left:1639.04px;top:857px;width:43.34px;height:30px;background:#1e1e1e"></div>
<div class="abs" style="left:2197.68px;top:857px;width:14.78px;height:30px;background:#1e1e1e"></div>
<div class="abs" style="left:1681.88px;top:857px;width:57.62px;height:30px;background:#1e1e1e"></div>
<div class="abs" style="left:2211.96px;top:857px;width:29.06px;height:30px;background:#1e1e1e"></div>
<div class="abs" style="left:1739.00px;top:857px;width:43.34px;height:30px;background:#1e1e1e"></div>
<div class="abs" style="left:2240.52px;top:857px;width:14.78px;height:30px;background:#1e1e1e"></div>
<div class="abs" style="left:1781.84px;top:857px;width:43.34px;height:30px;background:#1e1e1e"></div>
<div class="abs" style="left:2254.80px;top:857px;width:14.78px;height:30px;background:#1e1e1e"></div>
<div class="abs" style="left:1824.68px;top:857px;width:43.34px;height:30px;background:#1e1e1e"></div>
<div class="abs" style="left:2269.08px;top:857px;width:14.78px;height:30px;background:#1e1e1e"></div>
<div class="abs" style="left:1867.52px;top:857px;width:43.34px;height:30px;background:#1e1e1e"></div>
<div class="abs" style="left:2283.36px;top:857px;width:14.78px;height:30px;background:#1e1e1e"></div>
<div class="abs" style="left:1910.36px;top:857px;width:43.34px;height:30px;background:#1e1e1e"></div>
<div class="abs" style="left:2297.64px;top:857px;width:14.78px;height:30px;background:#1e1e1e"></div>
<div class="abs" style="left:1953.20px;top:857px;width:43.34px;height:30px;background:#1e1e1e"></div>
<div class="abs" style="left:2311.92px;top:857px;width:14.78px;height:30px;background:#1e1e1e"></div>
<div class="abs" style="left:1996.04px;top:857px;width:43.34px;height:30px;background:#1e1e1e"></div>
<div class="abs" style="left:2326.20px;top:857px;width:14.78px;height:30px;background:#1e1e1e"></div>
<div class="abs" style="left:2038.88px;top:857px;width:30.56px;height:30px;background:#1e1e1e"></div>
<div class="abs" style="left:2340.48px;top:857px;width:15.78px;height:30px;background:#1e1e1e"></div>
<div class="m" style="left:1383px;top:859px;line-height:32px;color:#fff">0a d4 16 03 01 00 ca 01  00 00 c6 03 03 9b a2 b8</div>
<div class="m" style="left:2113px;top:859px;line-height:32px;color:#fff"><span class="d" style="color:#8c8c8c"></span><span class="d" style="color:#8c8c8c"></span><span class="d"></span><span class="d"></span><span class="d"></span><span class="d"></span><span class="d"></span><span class="d"></span> <span class="d"></span><span class="d"></span><span class="d"></span><span class="d"></span><span class="d"></span><span class="d"></span><span class="d"></span><span class="d"></span></div>
<div class="m" style="left:1298px;top:889px;line-height:32px;color:#8c8c8c">0050</div>
<div class="abs" style="left:1382.00px;top:887px;width:43.34px;height:30px;background:#1e1e1e"></div>
<div class="abs" style="left:2112.00px;top:887px;width:14.78px;height:30px;background:#1e1e1e"></div>
<div class="abs" style="left:1424.84px;top:887px;width:43.34px;height:30px;background:#1e1e1e"></div>
<div class="abs" style="left:2126.28px;top:887px;width:14.78px;height:30px;background:#1e1e1e"></div>
<div class="abs" style="left:1467.68px;top:887px;width:43.34px;height:30px;background:#1e1e1e"></div>
<div class="abs" style="left:2140.56px;top:887px;width:14.78px;height:30px;background:#1e1e1e"></div>
<div class="abs" style="left:1510.52px;top:887px;width:43.34px;height:30px;background:#1e1e1e"></div>
<div class="abs" style="left:2154.84px;top:887px;width:14.78px;height:30px;background:#1e1e1e"></div>
<div class="abs" style="left:1553.36px;top:887px;width:43.34px;height:30px;background:#1e1e1e"></div>
<div class="abs" style="left:2169.12px;top:887px;width:14.78px;height:30px;background:#1e1e1e"></div>
<div class="abs" style="left:1596.20px;top:887px;width:43.34px;height:30px;background:#1e1e1e"></div>
<div class="abs" style="left:2183.40px;top:887px;width:14.78px;height:30px;background:#1e1e1e"></div>
<div class="abs" style="left:1639.04px;top:887px;width:43.34px;height:30px;background:#1e1e1e"></div>
<div class="abs" style="left:2197.68px;top:887px;width:14.78px;height:30px;background:#1e1e1e"></div>
<div class="abs" style="left:1681.88px;top:887px;width:57.62px;height:30px;background:#1e1e1e"></div>
<div class="abs" style="left:2211.96px;top:887px;width:29.06px;height:30px;background:#1e1e1e"></div>
<div class="abs" style="left:1739.00px;top:887px;width:43.34px;height:30px;background:#1e1e1e"></div>
<div class="abs" style="left:2240.52px;top:887px;width:14.78px;height:30px;background:#1e1e1e"></div>
<div class="abs" style="left:1781.84px;top:887px;width:43.34px;height:30px;background:#1e1e1e"></div>
<div class="abs" style="left:2254.80px;top:887px;width:14.78px;height:30px;background:#1e1e1e"></div>
<div class="abs" style="left:1824.68px;top:887px;width:43.34px;height:30px;background:#1e1e1e"></div>
<div class="abs" style="left:2269.08px;top:887px;width:14.78px;height:30px;background:#1e1e1e"></div>
<div class="abs" style="left:1867.52px;top:887px;width:43.34px;height:30px;background:#1e1e1e"></div>
<div class="abs" style="left:2283.36px;top:887px;width:14.78px;height:30px;background:#1e1e1e"></div>
<div class="abs" style="left:1910.36px;top:887px;width:43.34px;height:30px;background:#1e1e1e"></div>
<div class="abs" style="left:2297.64px;top:887px;width:14.78px;height:30px;background:#1e1e1e"></div>
<div class="abs" style="left:1953.20px;top:887px;width:43.34px;height:30px;background:#1e1e1e"></div>
<div class="abs" style="left:2311.92px;top:887px;width:14.78px;height:30px;background:#1e1e1e"></div>
<div class="abs" style="left:1996.04px;top:887px;width:43.34px;height:30px;background:#1e1e1e"></div>
<div class="abs" style="left:2326.20px;top:887px;width:14.78px;height:30px;background:#1e1e1e"></div>
<div class="abs" style="left:2038.88px;top:887px;width:30.56px;height:30px;background:#1e1e1e"></div>
<div class="abs" style="left:2340.48px;top:887px;width:15.78px;height:30px;background:#1e1e1e"></div>
<div class="m" style="left:1383px;top:889px;line-height:32px;color:#fff">59 38 bd 8c 3a 63 aa 14  f0 ab eb 50 4c 3f f3 0c</div>
<div class="m" style="left:2113px;top:889px;line-height:32px;color:#fff">Y8<span class="d"></span><span class="d"></span>:c<span class="d"></span><span class="d"></span> <span class="d"></span><span class="d"></span><span class="d"></span>PL?<span class="d"></span><span class="d"></span></div>
<div class="m" style="left:1298px;top:919px;line-height:32px;color:#8c8c8c">0060</div>
<div class="abs" style="left:1382.00px;top:917px;width:43.34px;height:30px;background:#1e1e1e"></div>
<div class="abs" style="left:2112.00px;top:917px;width:14.78px;height:30px;background:#1e1e1e"></div>
<div class="abs" style="left:1424.84px;top:917px;width:43.34px;height:30px;background:#1e1e1e"></div>
<div class="abs" style="left:2126.28px;top:917px;width:14.78px;height:30px;background:#1e1e1e"></div>
<div class="abs" style="left:1467.68px;top:917px;width:43.34px;height:30px;background:#1e1e1e"></div>
<div class="abs" style="left:2140.56px;top:917px;width:14.78px;height:30px;background:#1e1e1e"></div>
<div class="abs" style="left:1510.52px;top:917px;width:43.34px;height:30px;background:#1e1e1e"></div>
<div class="abs" style="left:2154.84px;top:917px;width:14.78px;height:30px;background:#1e1e1e"></div>
<div class="abs" style="left:1553.36px;top:917px;width:43.34px;height:30px;background:#1e1e1e"></div>
<div class="abs" style="left:2169.12px;top:917px;width:14.78px;height:30px;background:#1e1e1e"></div>
<div class="abs" style="left:1596.20px;top:917px;width:43.34px;height:30px;background:#1e1e1e"></div>
<div class="abs" style="left:2183.40px;top:917px;width:14.78px;height:30px;background:#1e1e1e"></div>
<div class="abs" style="left:1639.04px;top:917px;width:43.34px;height:30px;background:#1e1e1e"></div>
<div class="abs" style="left:2197.68px;top:917px;width:14.78px;height:30px;background:#1e1e1e"></div>
<div class="abs" style="left:1681.88px;top:917px;width:57.62px;height:30px;background:#1e1e1e"></div>
<div class="abs" style="left:2211.96px;top:917px;width:29.06px;height:30px;background:#1e1e1e"></div>
<div class="abs" style="left:1739.00px;top:917px;width:43.34px;height:30px;background:#1e1e1e"></div>
<div class="abs" style="left:2240.52px;top:917px;width:14.78px;height:30px;background:#1e1e1e"></div>
<div class="abs" style="left:1781.84px;top:917px;width:43.34px;height:30px;background:#1e1e1e"></div>
<div class="abs" style="left:2254.80px;top:917px;width:14.78px;height:30px;background:#1e1e1e"></div>
<div class="abs" style="left:1824.68px;top:917px;width:43.34px;height:30px;background:#1e1e1e"></div>
<div class="abs" style="left:2269.08px;top:917px;width:14.78px;height:30px;background:#1e1e1e"></div>
<div class="abs" style="left:1867.52px;top:917px;width:43.34px;height:30px;background:#1e1e1e"></div>
<div class="abs" style="left:2283.36px;top:917px;width:14.78px;height:30px;background:#1e1e1e"></div>
<div class="abs" style="left:1910.36px;top:917px;width:43.34px;height:30px;background:#1e1e1e"></div>
<div class="abs" style="left:2297.64px;top:917px;width:14.78px;height:30px;background:#1e1e1e"></div>
<div class="abs" style="left:1953.20px;top:917px;width:43.34px;height:30px;background:#1e1e1e"></div>
<div class="abs" style="left:2311.92px;top:917px;width:14.78px;height:30px;background:#1e1e1e"></div>
<div class="abs" style="left:1996.04px;top:917px;width:43.34px;height:30px;background:#1e1e1e"></div>
<div class="abs" style="left:2326.20px;top:917px;width:14.78px;height:30px;background:#1e1e1e"></div>
<div class="abs" style="left:2038.88px;top:917px;width:30.56px;height:30px;background:#1e1e1e"></div>
<div class="abs" style="left:2340.48px;top:917px;width:15.78px;height:30px;background:#1e1e1e"></div>
<div class="m" style="left:1383px;top:919px;line-height:32px;color:#fff">56 27 b6 04 d5 ac e9 5d  89 73 ed 9b f3 00 00 2a</div>
<div class="m" style="left:2113px;top:919px;line-height:32px;color:#fff">V&#x27;<span class="d"></span><span class="d"></span><span class="d"></span><span class="d"></span><span class="d"></span>] <span class="d"></span>s<span class="d"></span><span class="d"></span><span class="d"></span><span class="d"></span><span class="d"></span>*</div>
<div class="m" style="left:1298px;top:949px;line-height:32px;color:#dcdcdc">0070</div>
<div class="abs" style="left:1382.00px;top:947px;width:43.34px;height:30px;background:#e0241b"></div>
<div class="abs" style="left:2112.00px;top:947px;width:14.78px;height:30px;background:#e0241b"></div>
<div class="abs" style="left:1424.84px;top:947px;width:43.34px;height:30px;background:#e0241b"></div>
<div class="abs" style="left:2126.28px;top:947px;width:14.78px;height:30px;background:#e0241b"></div>
<div class="abs" style="left:1467.68px;top:947px;width:43.34px;height:30px;background:#e0241b"></div>
<div class="abs" style="left:2140.56px;top:947px;width:14.78px;height:30px;background:#e0241b"></div>
<div class="abs" style="left:1510.52px;top:947px;width:43.34px;height:30px;background:#e0241b"></div>
<div class="abs" style="left:2154.84px;top:947px;width:14.78px;height:30px;background:#e0241b"></div>
<div class="abs" style="left:1553.36px;top:947px;width:43.34px;height:30px;background:#e0241b"></div>
<div class="abs" style="left:2169.12px;top:947px;width:14.78px;height:30px;background:#e0241b"></div>
<div class="abs" style="left:1596.20px;top:947px;width:43.34px;height:30px;background:#e0241b"></div>
<div class="abs" style="left:2183.40px;top:947px;width:14.78px;height:30px;background:#e0241b"></div>
<div class="abs" style="left:1639.04px;top:947px;width:43.34px;height:30px;background:#e0241b"></div>
<div class="abs" style="left:2197.68px;top:947px;width:14.78px;height:30px;background:#e0241b"></div>
<div class="abs" style="left:1681.88px;top:947px;width:57.62px;height:30px;background:#e0241b"></div>
<div class="abs" style="left:2211.96px;top:947px;width:29.06px;height:30px;background:#e0241b"></div>
<div class="abs" style="left:1739.00px;top:947px;width:43.34px;height:30px;background:#e0241b"></div>
<div class="abs" style="left:2240.52px;top:947px;width:14.78px;height:30px;background:#e0241b"></div>
<div class="abs" style="left:1781.84px;top:947px;width:43.34px;height:30px;background:#e0241b"></div>
<div class="abs" style="left:2254.80px;top:947px;width:14.78px;height:30px;background:#e0241b"></div>
<div class="abs" style="left:1824.68px;top:947px;width:43.34px;height:30px;background:#e0241b"></div>
<div class="abs" style="left:2269.08px;top:947px;width:14.78px;height:30px;background:#e0241b"></div>
<div class="abs" style="left:1867.52px;top:947px;width:43.34px;height:30px;background:#e0241b"></div>
<div class="abs" style="left:2283.36px;top:947px;width:14.78px;height:30px;background:#e0241b"></div>
<div class="abs" style="left:1910.36px;top:947px;width:43.34px;height:30px;background:#e0241b"></div>
<div class="abs" style="left:2297.64px;top:947px;width:14.78px;height:30px;background:#e0241b"></div>
<div class="abs" style="left:1953.20px;top:947px;width:43.34px;height:30px;background:#e0241b"></div>
<div class="abs" style="left:2311.92px;top:947px;width:14.78px;height:30px;background:#e0241b"></div>
<div class="abs" style="left:1996.04px;top:947px;width:43.34px;height:30px;background:#e0241b"></div>
<div class="abs" style="left:2326.20px;top:947px;width:14.78px;height:30px;background:#e0241b"></div>
<div class="abs" style="left:2038.88px;top:947px;width:30.56px;height:30px;background:#e0241b"></div>
<div class="abs" style="left:2340.48px;top:947px;width:15.78px;height:30px;background:#e0241b"></div>
<div class="m" style="left:1383px;top:949px;line-height:32px;color:#fff">c0 2f c0 2b 00 9e cc 14  cc 13 cc 15 c0 14 c0 0a</div>
<div class="m" style="left:2113px;top:949px;line-height:32px;color:#fff"><span class="d"></span>/<span class="d"></span>+<span class="d"></span><span class="d"></span><span class="d"></span><span class="d"></span> <span class="d"></span><span class="d"></span><span class="d"></span><span class="d"></span><span class="d"></span><span class="d"></span><span class="d"></span><span class="d"></span></div>
<div class="m" style="left:1298px;top:979px;line-height:32px;color:#dcdcdc">0080</div>
<div class="abs" style="left:1382.00px;top:977px;width:43.34px;height:30px;background:#e0241b"></div>
<div class="abs" style="left:2112.00px;top:977px;width:14.78px;height:30px;background:#e0241b"></div>
<div class="abs" style="left:1424.84px;top:977px;width:43.34px;height:30px;background:#e0241b"></div>
<div class="abs" style="left:2126.28px;top:977px;width:14.78px;height:30px;background:#e0241b"></div>
<div class="abs" style="left:1467.68px;top:977px;width:43.34px;height:30px;background:#e0241b"></div>
<div class="abs" style="left:2140.56px;top:977px;width:14.78px;height:30px;background:#e0241b"></div>
<div class="abs" style="left:1510.52px;top:977px;width:43.34px;height:30px;background:#e0241b"></div>
<div class="abs" style="left:2154.84px;top:977px;width:14.78px;height:30px;background:#e0241b"></div>
<div class="abs" style="left:1553.36px;top:977px;width:43.34px;height:30px;background:#e0241b"></div>
<div class="abs" style="left:2169.12px;top:977px;width:14.78px;height:30px;background:#e0241b"></div>
<div class="abs" style="left:1596.20px;top:977px;width:43.34px;height:30px;background:#e0241b"></div>
<div class="abs" style="left:2183.40px;top:977px;width:14.78px;height:30px;background:#e0241b"></div>
<div class="abs" style="left:1639.04px;top:977px;width:43.34px;height:30px;background:#e0241b"></div>
<div class="abs" style="left:2197.68px;top:977px;width:14.78px;height:30px;background:#e0241b"></div>
<div class="abs" style="left:1681.88px;top:977px;width:57.62px;height:30px;background:#e0241b"></div>
<div class="abs" style="left:2211.96px;top:977px;width:29.06px;height:30px;background:#e0241b"></div>
<div class="abs" style="left:1739.00px;top:977px;width:43.34px;height:30px;background:#e0241b"></div>
<div class="abs" style="left:2240.52px;top:977px;width:14.78px;height:30px;background:#e0241b"></div>
<div class="abs" style="left:1781.84px;top:977px;width:43.34px;height:30px;background:#e0241b"></div>
<div class="abs" style="left:2254.80px;top:977px;width:14.78px;height:30px;background:#e0241b"></div>
<div class="abs" style="left:1824.68px;top:977px;width:43.34px;height:30px;background:#e0241b"></div>
<div class="abs" style="left:2269.08px;top:977px;width:14.78px;height:30px;background:#e0241b"></div>
<div class="abs" style="left:1867.52px;top:977px;width:43.34px;height:30px;background:#e0241b"></div>
<div class="abs" style="left:2283.36px;top:977px;width:14.78px;height:30px;background:#e0241b"></div>
<div class="abs" style="left:1910.36px;top:977px;width:43.34px;height:30px;background:#e0241b"></div>
<div class="abs" style="left:2297.64px;top:977px;width:14.78px;height:30px;background:#e0241b"></div>
<div class="abs" style="left:1953.20px;top:977px;width:43.34px;height:30px;background:#e0241b"></div>
<div class="abs" style="left:2311.92px;top:977px;width:14.78px;height:30px;background:#e0241b"></div>
<div class="abs" style="left:1996.04px;top:977px;width:43.34px;height:30px;background:#e0241b"></div>
<div class="abs" style="left:2326.20px;top:977px;width:14.78px;height:30px;background:#e0241b"></div>
<div class="abs" style="left:2038.88px;top:977px;width:30.56px;height:30px;background:#e0241b"></div>
<div class="abs" style="left:2340.48px;top:977px;width:15.78px;height:30px;background:#e0241b"></div>
<div class="m" style="left:1383px;top:979px;line-height:32px;color:#fff">00 39 c0 13 c0 09 00 33  c0 11 c0 07 00 9c 00 35</div>
<div class="m" style="left:2113px;top:979px;line-height:32px;color:#fff"><span class="d"></span>9<span class="d"></span><span class="d"></span><span class="d"></span><span class="d"></span><span class="d"></span>3 <span class="d"></span><span class="d"></span><span class="d"></span><span class="d"></span><span class="d"></span><span class="d"></span><span class="d"></span>5</div>
<div class="m" style="left:1298px;top:1009px;line-height:32px;color:#dcdcdc">0090</div>
<div class="abs" style="left:1382.00px;top:1007px;width:43.34px;height:30px;background:#e0241b"></div>
<div class="abs" style="left:2112.00px;top:1007px;width:14.78px;height:30px;background:#e0241b"></div>
<div class="abs" style="left:1424.84px;top:1007px;width:43.34px;height:30px;background:#e0241b"></div>
<div class="abs" style="left:2126.28px;top:1007px;width:14.78px;height:30px;background:#e0241b"></div>
<div class="abs" style="left:1467.68px;top:1007px;width:43.34px;height:30px;background:#e0241b"></div>
<div class="abs" style="left:2140.56px;top:1007px;width:14.78px;height:30px;background:#e0241b"></div>
<div class="abs" style="left:1510.52px;top:1007px;width:43.34px;height:30px;background:#e0241b"></div>
<div class="abs" style="left:2154.84px;top:1007px;width:14.78px;height:30px;background:#e0241b"></div>
<div class="abs" style="left:1553.36px;top:1007px;width:43.34px;height:30px;background:#e0241b"></div>
<div class="abs" style="left:2169.12px;top:1007px;width:14.78px;height:30px;background:#e0241b"></div>
<div class="abs" style="left:1596.20px;top:1007px;width:43.34px;height:30px;background:#e0241b"></div>
<div class="abs" style="left:2183.40px;top:1007px;width:14.78px;height:30px;background:#e0241b"></div>
<div class="abs" style="left:1639.04px;top:1007px;width:43.34px;height:30px;background:#e0241b"></div>
<div class="abs" style="left:2197.68px;top:1007px;width:14.78px;height:30px;background:#e0241b"></div>
<div class="abs" style="left:1681.88px;top:1007px;width:57.62px;height:30px;background:#e0241b"></div>
<div class="abs" style="left:2211.96px;top:1007px;width:29.06px;height:30px;background:#e0241b"></div>
<div class="abs" style="left:1739.00px;top:1007px;width:43.34px;height:30px;background:#e0241b"></div>
<div class="abs" style="left:2240.52px;top:1007px;width:14.78px;height:30px;background:#e0241b"></div>
<div class="abs" style="left:1781.84px;top:1007px;width:30.56px;height:30px;background:#e0241b"></div>
<div class="abs" style="left:2254.80px;top:1007px;width:15.78px;height:30px;background:#e0241b"></div>
<div class="abs" style="left:1824.68px;top:1007px;width:43.34px;height:30px;background:#1e1e1e"></div>
<div class="abs" style="left:2269.08px;top:1007px;width:14.78px;height:30px;background:#1e1e1e"></div>
<div class="abs" style="left:1867.52px;top:1007px;width:43.34px;height:30px;background:#1e1e1e"></div>
<div class="abs" style="left:2283.36px;top:1007px;width:14.78px;height:30px;background:#1e1e1e"></div>
<div class="abs" style="left:1910.36px;top:1007px;width:43.34px;height:30px;background:#1e1e1e"></div>
<div class="abs" style="left:2297.64px;top:1007px;width:14.78px;height:30px;background:#1e1e1e"></div>
<div class="abs" style="left:1953.20px;top:1007px;width:43.34px;height:30px;background:#1e1e1e"></div>
<div class="abs" style="left:2311.92px;top:1007px;width:14.78px;height:30px;background:#1e1e1e"></div>
<div class="abs" style="left:1996.04px;top:1007px;width:43.34px;height:30px;background:#1e1e1e"></div>
<div class="abs" style="left:2326.20px;top:1007px;width:14.78px;height:30px;background:#1e1e1e"></div>
<div class="abs" style="left:2038.88px;top:1007px;width:30.56px;height:30px;background:#1e1e1e"></div>
<div class="abs" style="left:2340.48px;top:1007px;width:15.78px;height:30px;background:#1e1e1e"></div>
<div class="m" style="left:1383px;top:1009px;line-height:32px;color:#fff">00 2f 00 05 00 04 00 0a  00 ff 01 00 00 73 00 00</div>
<div class="m" style="left:2113px;top:1009px;line-height:32px;color:#fff"><span class="d"></span>/<span class="d"></span><span class="d"></span><span class="d"></span><span class="d"></span><span class="d"></span><span class="d"></span> <span class="d"></span><span class="d"></span><span class="d"></span><span class="d"></span><span class="d"></span>s<span class="d"></span><span class="d"></span></div>
<div class="m" style="left:1298px;top:1039px;line-height:32px;color:#8c8c8c">00a0</div>
<div class="abs" style="left:1382.00px;top:1037px;width:43.34px;height:30px;background:#1e1e1e"></div>
<div class="abs" style="left:2112.00px;top:1037px;width:14.78px;height:30px;background:#1e1e1e"></div>
<div class="abs" style="left:1424.84px;top:1037px;width:43.34px;height:30px;background:#1e1e1e"></div>
<div class="abs" style="left:2126.28px;top:1037px;width:14.78px;height:30px;background:#1e1e1e"></div>
<div class="abs" style="left:1467.68px;top:1037px;width:43.34px;height:30px;background:#1e1e1e"></div>
<div class="abs" style="left:2140.56px;top:1037px;width:14.78px;height:30px;background:#1e1e1e"></div>
<div class="abs" style="left:1510.52px;top:1037px;width:43.34px;height:30px;background:#1e1e1e"></div>
<div class="abs" style="left:2154.84px;top:1037px;width:14.78px;height:30px;background:#1e1e1e"></div>
<div class="abs" style="left:1553.36px;top:1037px;width:43.34px;height:30px;background:#1e1e1e"></div>
<div class="abs" style="left:2169.12px;top:1037px;width:14.78px;height:30px;background:#1e1e1e"></div>
<div class="abs" style="left:1596.20px;top:1037px;width:43.34px;height:30px;background:#1e1e1e"></div>
<div class="abs" style="left:2183.40px;top:1037px;width:14.78px;height:30px;background:#1e1e1e"></div>
<div class="abs" style="left:1639.04px;top:1037px;width:43.34px;height:30px;background:#1e1e1e"></div>
<div class="abs" style="left:2197.68px;top:1037px;width:14.78px;height:30px;background:#1e1e1e"></div>
<div class="abs" style="left:1681.88px;top:1037px;width:57.62px;height:30px;background:#1e1e1e"></div>
<div class="abs" style="left:2211.96px;top:1037px;width:29.06px;height:30px;background:#1e1e1e"></div>
<div class="abs" style="left:1739.00px;top:1037px;width:43.34px;height:30px;background:#1e1e1e"></div>
<div class="abs" style="left:2240.52px;top:1037px;width:14.78px;height:30px;background:#1e1e1e"></div>
<div class="abs" style="left:1781.84px;top:1037px;width:43.34px;height:30px;background:#1e1e1e"></div>
<div class="abs" style="left:2254.80px;top:1037px;width:14.78px;height:30px;background:#1e1e1e"></div>
<div class="abs" style="left:1824.68px;top:1037px;width:43.34px;height:30px;background:#1e1e1e"></div>
<div class="abs" style="left:2269.08px;top:1037px;width:14.78px;height:30px;background:#1e1e1e"></div>
<div class="abs" style="left:1867.52px;top:1037px;width:43.34px;height:30px;background:#1e1e1e"></div>
<div class="abs" style="left:2283.36px;top:1037px;width:14.78px;height:30px;background:#1e1e1e"></div>
<div class="abs" style="left:1910.36px;top:1037px;width:43.34px;height:30px;background:#1e1e1e"></div>
<div class="abs" style="left:2297.64px;top:1037px;width:14.78px;height:30px;background:#1e1e1e"></div>
<div class="abs" style="left:1953.20px;top:1037px;width:43.34px;height:30px;background:#1e1e1e"></div>
<div class="abs" style="left:2311.92px;top:1037px;width:14.78px;height:30px;background:#1e1e1e"></div>
<div class="abs" style="left:1996.04px;top:1037px;width:43.34px;height:30px;background:#1e1e1e"></div>
<div class="abs" style="left:2326.20px;top:1037px;width:14.78px;height:30px;background:#1e1e1e"></div>
<div class="abs" style="left:2038.88px;top:1037px;width:30.56px;height:30px;background:#1e1e1e"></div>
<div class="abs" style="left:2340.48px;top:1037px;width:15.78px;height:30px;background:#1e1e1e"></div>
<div class="m" style="left:1383px;top:1039px;line-height:32px;color:#fff">00 0e 00 0c 00 00 09 31  30 2e 30 2e 31 2e 36 39</div>
<div class="m" style="left:2113px;top:1039px;line-height:32px;color:#fff"><span class="d"></span><span class="d"></span><span class="d"></span><span class="d"></span><span class="d"></span><span class="d"></span><span class="d"></span>1 0.0.1.69</div>
<div class="m" style="left:1298px;top:1069px;line-height:32px;color:#8c8c8c">00b0</div>
<div class="abs" style="left:1382.00px;top:1067px;width:43.34px;height:30px;background:#1e1e1e"></div>
<div class="abs" style="left:2112.00px;top:1067px;width:14.78px;height:30px;background:#1e1e1e"></div>
<div class="abs" style="left:1424.84px;top:1067px;width:43.34px;height:30px;background:#1e1e1e"></div>
<div class="abs" style="left:2126.28px;top:1067px;width:14.78px;height:30px;background:#1e1e1e"></div>
<div class="abs" style="left:1467.68px;top:1067px;width:43.34px;height:30px;background:#1e1e1e"></div>
<div class="abs" style="left:2140.56px;top:1067px;width:14.78px;height:30px;background:#1e1e1e"></div>
<div class="abs" style="left:1510.52px;top:1067px;width:43.34px;height:30px;background:#1e1e1e"></div>
<div class="abs" style="left:2154.84px;top:1067px;width:14.78px;height:30px;background:#1e1e1e"></div>
<div class="abs" style="left:1553.36px;top:1067px;width:43.34px;height:30px;background:#1e1e1e"></div>
<div class="abs" style="left:2169.12px;top:1067px;width:14.78px;height:30px;background:#1e1e1e"></div>
<div class="abs" style="left:1596.20px;top:1067px;width:43.34px;height:30px;background:#1e1e1e"></div>
<div class="abs" style="left:2183.40px;top:1067px;width:14.78px;height:30px;background:#1e1e1e"></div>
<div class="abs" style="left:1639.04px;top:1067px;width:43.34px;height:30px;background:#1e1e1e"></div>
<div class="abs" style="left:2197.68px;top:1067px;width:14.78px;height:30px;background:#1e1e1e"></div>
<div class="abs" style="left:1681.88px;top:1067px;width:57.62px;height:30px;background:#1e1e1e"></div>
<div class="abs" style="left:2211.96px;top:1067px;width:29.06px;height:30px;background:#1e1e1e"></div>
<div class="abs" style="left:1739.00px;top:1067px;width:43.34px;height:30px;background:#1e1e1e"></div>
<div class="abs" style="left:2240.52px;top:1067px;width:14.78px;height:30px;background:#1e1e1e"></div>
<div class="abs" style="left:1781.84px;top:1067px;width:43.34px;height:30px;background:#1e1e1e"></div>
<div class="abs" style="left:2254.80px;top:1067px;width:14.78px;height:30px;background:#1e1e1e"></div>
<div class="abs" style="left:1824.68px;top:1067px;width:43.34px;height:30px;background:#1e1e1e"></div>
<div class="abs" style="left:2269.08px;top:1067px;width:14.78px;height:30px;background:#1e1e1e"></div>
<div class="abs" style="left:1867.52px;top:1067px;width:43.34px;height:30px;background:#1e1e1e"></div>
<div class="abs" style="left:2283.36px;top:1067px;width:14.78px;height:30px;background:#1e1e1e"></div>
<div class="abs" style="left:1910.36px;top:1067px;width:43.34px;height:30px;background:#1e1e1e"></div>
<div class="abs" style="left:2297.64px;top:1067px;width:14.78px;height:30px;background:#1e1e1e"></div>
<div class="abs" style="left:1953.20px;top:1067px;width:43.34px;height:30px;background:#1e1e1e"></div>
<div class="abs" style="left:2311.92px;top:1067px;width:14.78px;height:30px;background:#1e1e1e"></div>
<div class="abs" style="left:1996.04px;top:1067px;width:43.34px;height:30px;background:#1e1e1e"></div>
<div class="abs" style="left:2326.20px;top:1067px;width:14.78px;height:30px;background:#1e1e1e"></div>
<div class="abs" style="left:2038.88px;top:1067px;width:30.56px;height:30px;background:#1e1e1e"></div>
<div class="abs" style="left:2340.48px;top:1067px;width:15.78px;height:30px;background:#1e1e1e"></div>
<div class="m" style="left:1383px;top:1069px;line-height:32px;color:#fff">00 17 00 00 00 23 00 00  00 0d 00 16 00 14 06 01</div>
<div class="m" style="left:2113px;top:1069px;line-height:32px;color:#fff"><span class="d"></span><span class="d"></span><span class="d"></span><span class="d"></span><span class="d"></span>#<span class="d"></span><span class="d"></span> <span class="d"></span><span class="d"></span><span class="d"></span><span class="d"></span><span class="d"></span><span class="d"></span><span class="d"></span><span class="d"></span></div>
<div class="m" style="left:1298px;top:1099px;line-height:32px;color:#8c8c8c">00c0</div>
<div class="abs" style="left:1382.00px;top:1097px;width:43.34px;height:30px;background:#1e1e1e"></div>
<div class="abs" style="left:2112.00px;top:1097px;width:14.78px;height:30px;background:#1e1e1e"></div>
<div class="abs" style="left:1424.84px;top:1097px;width:43.34px;height:30px;background:#1e1e1e"></div>
<div class="abs" style="left:2126.28px;top:1097px;width:14.78px;height:30px;background:#1e1e1e"></div>
<div class="abs" style="left:1467.68px;top:1097px;width:43.34px;height:30px;background:#1e1e1e"></div>
<div class="abs" style="left:2140.56px;top:1097px;width:14.78px;height:30px;background:#1e1e1e"></div>
<div class="abs" style="left:1510.52px;top:1097px;width:43.34px;height:30px;background:#1e1e1e"></div>
<div class="abs" style="left:2154.84px;top:1097px;width:14.78px;height:30px;background:#1e1e1e"></div>
<div class="abs" style="left:1553.36px;top:1097px;width:43.34px;height:30px;background:#1e1e1e"></div>
<div class="abs" style="left:2169.12px;top:1097px;width:14.78px;height:30px;background:#1e1e1e"></div>
<div class="abs" style="left:1596.20px;top:1097px;width:43.34px;height:30px;background:#1e1e1e"></div>
<div class="abs" style="left:2183.40px;top:1097px;width:14.78px;height:30px;background:#1e1e1e"></div>
<div class="abs" style="left:1639.04px;top:1097px;width:43.34px;height:30px;background:#1e1e1e"></div>
<div class="abs" style="left:2197.68px;top:1097px;width:14.78px;height:30px;background:#1e1e1e"></div>
<div class="abs" style="left:1681.88px;top:1097px;width:57.62px;height:30px;background:#1e1e1e"></div>
<div class="abs" style="left:2211.96px;top:1097px;width:29.06px;height:30px;background:#1e1e1e"></div>
<div class="abs" style="left:1739.00px;top:1097px;width:43.34px;height:30px;background:#1e1e1e"></div>
<div class="abs" style="left:2240.52px;top:1097px;width:14.78px;height:30px;background:#1e1e1e"></div>
<div class="abs" style="left:1781.84px;top:1097px;width:43.34px;height:30px;background:#1e1e1e"></div>
<div class="abs" style="left:2254.80px;top:1097px;width:14.78px;height:30px;background:#1e1e1e"></div>
<div class="abs" style="left:1824.68px;top:1097px;width:43.34px;height:30px;background:#1e1e1e"></div>
<div class="abs" style="left:2269.08px;top:1097px;width:14.78px;height:30px;background:#1e1e1e"></div>
<div class="abs" style="left:1867.52px;top:1097px;width:43.34px;height:30px;background:#1e1e1e"></div>
<div class="abs" style="left:2283.36px;top:1097px;width:14.78px;height:30px;background:#1e1e1e"></div>
<div class="abs" style="left:1910.36px;top:1097px;width:43.34px;height:30px;background:#1e1e1e"></div>
<div class="abs" style="left:2297.64px;top:1097px;width:14.78px;height:30px;background:#1e1e1e"></div>
<div class="abs" style="left:1953.20px;top:1097px;width:43.34px;height:30px;background:#1e1e1e"></div>
<div class="abs" style="left:2311.92px;top:1097px;width:14.78px;height:30px;background:#1e1e1e"></div>
<div class="abs" style="left:1996.04px;top:1097px;width:43.34px;height:30px;background:#1e1e1e"></div>
<div class="abs" style="left:2326.20px;top:1097px;width:14.78px;height:30px;background:#1e1e1e"></div>
<div class="abs" style="left:2038.88px;top:1097px;width:30.56px;height:30px;background:#1e1e1e"></div>
<div class="abs" style="left:2340.48px;top:1097px;width:15.78px;height:30px;background:#1e1e1e"></div>
<div class="m" style="left:1383px;top:1099px;line-height:32px;color:#fff">06 03 05 01 05 03 04 01  04 03 03 01 03 03 02 01</div>
<div class="m" style="left:2113px;top:1099px;line-height:32px;color:#fff"><span class="d"></span><span class="d"></span><span class="d"></span><span class="d"></span><span class="d"></span><span class="d"></span><span class="d"></span><span class="d"></span> <span class="d"></span><span class="d"></span><span class="d"></span><span class="d"></span><span class="d"></span><span class="d"></span><span class="d"></span><span class="d"></span></div>
<div class="m" style="left:1298px;top:1129px;line-height:32px;color:#8c8c8c">00d0</div>
<div class="abs" style="left:1382.00px;top:1127px;width:43.34px;height:30px;background:#1e1e1e"></div>
<div class="abs" style="left:2112.00px;top:1127px;width:14.78px;height:30px;background:#1e1e1e"></div>
<div class="abs" style="left:1424.84px;top:1127px;width:43.34px;height:30px;background:#1e1e1e"></div>
<div class="abs" style="left:2126.28px;top:1127px;width:14.78px;height:30px;background:#1e1e1e"></div>
<div class="abs" style="left:1467.68px;top:1127px;width:43.34px;height:30px;background:#1e1e1e"></div>
<div class="abs" style="left:2140.56px;top:1127px;width:14.78px;height:30px;background:#1e1e1e"></div>
<div class="abs" style="left:1510.52px;top:1127px;width:43.34px;height:30px;background:#1e1e1e"></div>
<div class="abs" style="left:2154.84px;top:1127px;width:14.78px;height:30px;background:#1e1e1e"></div>
<div class="abs" style="left:1553.36px;top:1127px;width:43.34px;height:30px;background:#1e1e1e"></div>
<div class="abs" style="left:2169.12px;top:1127px;width:14.78px;height:30px;background:#1e1e1e"></div>
<div class="abs" style="left:1596.20px;top:1127px;width:43.34px;height:30px;background:#1e1e1e"></div>
<div class="abs" style="left:2183.40px;top:1127px;width:14.78px;height:30px;background:#1e1e1e"></div>
<div class="abs" style="left:1639.04px;top:1127px;width:43.34px;height:30px;background:#1e1e1e"></div>
<div class="abs" style="left:2197.68px;top:1127px;width:14.78px;height:30px;background:#1e1e1e"></div>
<div class="abs" style="left:1681.88px;top:1127px;width:57.62px;height:30px;background:#1e1e1e"></div>
<div class="abs" style="left:2211.96px;top:1127px;width:29.06px;height:30px;background:#1e1e1e"></div>
<div class="abs" style="left:1739.00px;top:1127px;width:43.34px;height:30px;background:#1e1e1e"></div>
<div class="abs" style="left:2240.52px;top:1127px;width:14.78px;height:30px;background:#1e1e1e"></div>
<div class="abs" style="left:1781.84px;top:1127px;width:43.34px;height:30px;background:#1e1e1e"></div>
<div class="abs" style="left:2254.80px;top:1127px;width:14.78px;height:30px;background:#1e1e1e"></div>
<div class="abs" style="left:1824.68px;top:1127px;width:43.34px;height:30px;background:#1e1e1e"></div>
<div class="abs" style="left:2269.08px;top:1127px;width:14.78px;height:30px;background:#1e1e1e"></div>
<div class="abs" style="left:1867.52px;top:1127px;width:43.34px;height:30px;background:#1e1e1e"></div>
<div class="abs" style="left:2283.36px;top:1127px;width:14.78px;height:30px;background:#1e1e1e"></div>
<div class="abs" style="left:1910.36px;top:1127px;width:43.34px;height:30px;background:#1e1e1e"></div>
<div class="abs" style="left:2297.64px;top:1127px;width:14.78px;height:30px;background:#1e1e1e"></div>
<div class="abs" style="left:1953.20px;top:1127px;width:43.34px;height:30px;background:#1e1e1e"></div>
<div class="abs" style="left:2311.92px;top:1127px;width:14.78px;height:30px;background:#1e1e1e"></div>
<div class="abs" style="left:1996.04px;top:1127px;width:43.34px;height:30px;background:#1e1e1e"></div>
<div class="abs" style="left:2326.20px;top:1127px;width:14.78px;height:30px;background:#1e1e1e"></div>
<div class="abs" style="left:2038.88px;top:1127px;width:30.56px;height:30px;background:#1e1e1e"></div>
<div class="abs" style="left:2340.48px;top:1127px;width:15.78px;height:30px;background:#1e1e1e"></div>
<div class="m" style="left:1383px;top:1129px;line-height:32px;color:#fff">02 03 00 05 00 05 01 00  00 00 00 33 74 00 00 00</div>
<div class="m" style="left:2113px;top:1129px;line-height:32px;color:#fff"><span class="d"></span><span class="d"></span><span class="d"></span><span class="d"></span><span class="d"></span><span class="d"></span><span class="d"></span><span class="d"></span> <span class="d"></span><span class="d"></span><span class="d"></span>3t<span class="d"></span><span class="d"></span><span class="d"></span></div>
<div class="m" style="left:1298px;top:1159px;line-height:32px;color:#8c8c8c">00e0</div>
<div class="abs" style="left:1382.00px;top:1157px;width:43.34px;height:30px;background:#1e1e1e"></div>
<div class="abs" style="left:2112.00px;top:1157px;width:14.78px;height:30px;background:#1e1e1e"></div>
<div class="abs" style="left:1424.84px;top:1157px;width:43.34px;height:30px;background:#1e1e1e"></div>
<div class="abs" style="left:2126.28px;top:1157px;width:14.78px;height:30px;background:#1e1e1e"></div>
<div class="abs" style="left:1467.68px;top:1157px;width:43.34px;height:30px;background:#1e1e1e"></div>
<div class="abs" style="left:2140.56px;top:1157px;width:14.78px;height:30px;background:#1e1e1e"></div>
<div class="abs" style="left:1510.52px;top:1157px;width:43.34px;height:30px;background:#1e1e1e"></div>
<div class="abs" style="left:2154.84px;top:1157px;width:14.78px;height:30px;background:#1e1e1e"></div>
<div class="abs" style="left:1553.36px;top:1157px;width:43.34px;height:30px;background:#1e1e1e"></div>
<div class="abs" style="left:2169.12px;top:1157px;width:14.78px;height:30px;background:#1e1e1e"></div>
<div class="abs" style="left:1596.20px;top:1157px;width:43.34px;height:30px;background:#1e1e1e"></div>
<div class="abs" style="left:2183.40px;top:1157px;width:14.78px;height:30px;background:#1e1e1e"></div>
<div class="abs" style="left:1639.04px;top:1157px;width:43.34px;height:30px;background:#1e1e1e"></div>
<div class="abs" style="left:2197.68px;top:1157px;width:14.78px;height:30px;background:#1e1e1e"></div>
<div class="abs" style="left:1681.88px;top:1157px;width:57.62px;height:30px;background:#1e1e1e"></div>
<div class="abs" style="left:2211.96px;top:1157px;width:29.06px;height:30px;background:#1e1e1e"></div>
<div class="abs" style="left:1739.00px;top:1157px;width:43.34px;height:30px;background:#1e1e1e"></div>
<div class="abs" style="left:2240.52px;top:1157px;width:14.78px;height:30px;background:#1e1e1e"></div>
<div class="abs" style="left:1781.84px;top:1157px;width:43.34px;height:30px;background:#1e1e1e"></div>
<div class="abs" style="left:2254.80px;top:1157px;width:14.78px;height:30px;background:#1e1e1e"></div>
<div class="abs" style="left:1824.68px;top:1157px;width:43.34px;height:30px;background:#1e1e1e"></div>
<div class="abs" style="left:2269.08px;top:1157px;width:14.78px;height:30px;background:#1e1e1e"></div>
<div class="abs" style="left:1867.52px;top:1157px;width:43.34px;height:30px;background:#1e1e1e"></div>
<div class="abs" style="left:2283.36px;top:1157px;width:14.78px;height:30px;background:#1e1e1e"></div>
<div class="abs" style="left:1910.36px;top:1157px;width:43.34px;height:30px;background:#1e1e1e"></div>
<div class="abs" style="left:2297.64px;top:1157px;width:14.78px;height:30px;background:#1e1e1e"></div>
<div class="abs" style="left:1953.20px;top:1157px;width:43.34px;height:30px;background:#1e1e1e"></div>
<div class="abs" style="left:2311.92px;top:1157px;width:14.78px;height:30px;background:#1e1e1e"></div>
<div class="abs" style="left:1996.04px;top:1157px;width:43.34px;height:30px;background:#1e1e1e"></div>
<div class="abs" style="left:2326.20px;top:1157px;width:14.78px;height:30px;background:#1e1e1e"></div>
<div class="abs" style="left:2038.88px;top:1157px;width:30.56px;height:30px;background:#1e1e1e"></div>
<div class="abs" style="left:2340.48px;top:1157px;width:15.78px;height:30px;background:#1e1e1e"></div>
<div class="m" style="left:1383px;top:1159px;line-height:32px;color:#fff">12 00 00 00 10 00 14 00  12 08 68 74 74 70 2f 31</div>
<div class="m" style="left:2113px;top:1159px;line-height:32px;color:#fff"><span class="d"></span><span class="d"></span><span class="d"></span><span class="d"></span><span class="d"></span><span class="d"></span><span class="d"></span><span class="d"></span> <span class="d"></span><span class="d"></span>http/1</div>
<div class="m" style="left:1298px;top:1189px;line-height:32px;color:#8c8c8c">00f0</div>
<div class="abs" style="left:1382.00px;top:1187px;width:43.34px;height:30px;background:#1e1e1e"></div>
<div class="abs" style="left:2112.00px;top:1187px;width:14.78px;height:30px;background:#1e1e1e"></div>
<div class="abs" style="left:1424.84px;top:1187px;width:43.34px;height:30px;background:#1e1e1e"></div>
<div class="abs" style="left:2126.28px;top:1187px;width:14.78px;height:30px;background:#1e1e1e"></div>
<div class="abs" style="left:1467.68px;top:1187px;width:43.34px;height:30px;background:#1e1e1e"></div>
<div class="abs" style="left:2140.56px;top:1187px;width:14.78px;height:30px;background:#1e1e1e"></div>
<div class="abs" style="left:1510.52px;top:1187px;width:43.34px;height:30px;background:#1e1e1e"></div>
<div class="abs" style="left:2154.84px;top:1187px;width:14.78px;height:30px;background:#1e1e1e"></div>
<div class="abs" style="left:1553.36px;top:1187px;width:43.34px;height:30px;background:#1e1e1e"></div>
<div class="abs" style="left:2169.12px;top:1187px;width:14.78px;height:30px;background:#1e1e1e"></div>
<div class="abs" style="left:1596.20px;top:1187px;width:43.34px;height:30px;background:#1e1e1e"></div>
<div class="abs" style="left:2183.40px;top:1187px;width:14.78px;height:30px;background:#1e1e1e"></div>
<div class="abs" style="left:1639.04px;top:1187px;width:43.34px;height:30px;background:#1e1e1e"></div>
<div class="abs" style="left:2197.68px;top:1187px;width:14.78px;height:30px;background:#1e1e1e"></div>
<div class="abs" style="left:1681.88px;top:1187px;width:57.62px;height:30px;background:#1e1e1e"></div>
<div class="abs" style="left:2211.96px;top:1187px;width:29.06px;height:30px;background:#1e1e1e"></div>
<div class="abs" style="left:1739.00px;top:1187px;width:43.34px;height:30px;background:#1e1e1e"></div>
<div class="abs" style="left:2240.52px;top:1187px;width:14.78px;height:30px;background:#1e1e1e"></div>
<div class="abs" style="left:1781.84px;top:1187px;width:43.34px;height:30px;background:#1e1e1e"></div>
<div class="abs" style="left:2254.80px;top:1187px;width:14.78px;height:30px;background:#1e1e1e"></div>
<div class="abs" style="left:1824.68px;top:1187px;width:43.34px;height:30px;background:#1e1e1e"></div>
<div class="abs" style="left:2269.08px;top:1187px;width:14.78px;height:30px;background:#1e1e1e"></div>
<div class="abs" style="left:1867.52px;top:1187px;width:43.34px;height:30px;background:#1e1e1e"></div>
<div class="abs" style="left:2283.36px;top:1187px;width:14.78px;height:30px;background:#1e1e1e"></div>
<div class="abs" style="left:1910.36px;top:1187px;width:43.34px;height:30px;background:#1e1e1e"></div>
<div class="abs" style="left:2297.64px;top:1187px;width:14.78px;height:30px;background:#1e1e1e"></div>
<div class="abs" style="left:1953.20px;top:1187px;width:43.34px;height:30px;background:#1e1e1e"></div>
<div class="abs" style="left:2311.92px;top:1187px;width:14.78px;height:30px;background:#1e1e1e"></div>
<div class="abs" style="left:1996.04px;top:1187px;width:43.34px;height:30px;background:#1e1e1e"></div>
<div class="abs" style="left:2326.20px;top:1187px;width:14.78px;height:30px;background:#1e1e1e"></div>
<div class="abs" style="left:2038.88px;top:1187px;width:30.56px;height:30px;background:#1e1e1e"></div>
<div class="abs" style="left:2340.48px;top:1187px;width:15.78px;height:30px;background:#1e1e1e"></div>
<div class="m" style="left:1383px;top:1189px;line-height:32px;color:#fff">2e 31 08 73 70 64 79 2f  33 2e 31 75 50 00 00 00</div>
<div class="m" style="left:2113px;top:1189px;line-height:32px;color:#fff">.1<span class="d"></span>spdy/ 3.1uP<span class="d"></span><span class="d"></span><span class="d"></span></div>
<div class="m" style="left:1298px;top:1219px;line-height:32px;color:#8c8c8c">0100</div>
<div class="abs" style="left:1382.00px;top:1217px;width:43.34px;height:30px;background:#1e1e1e"></div>
<div class="abs" style="left:2112.00px;top:1217px;width:14.78px;height:30px;background:#1e1e1e"></div>
<div class="abs" style="left:1424.84px;top:1217px;width:43.34px;height:30px;background:#1e1e1e"></div>
<div class="abs" style="left:2126.28px;top:1217px;width:14.78px;height:30px;background:#1e1e1e"></div>
<div class="abs" style="left:1467.68px;top:1217px;width:43.34px;height:30px;background:#1e1e1e"></div>
<div class="abs" style="left:2140.56px;top:1217px;width:14.78px;height:30px;background:#1e1e1e"></div>
<div class="abs" style="left:1510.52px;top:1217px;width:43.34px;height:30px;background:#1e1e1e"></div>
<div class="abs" style="left:2154.84px;top:1217px;width:14.78px;height:30px;background:#1e1e1e"></div>
<div class="abs" style="left:1553.36px;top:1217px;width:43.34px;height:30px;background:#1e1e1e"></div>
<div class="abs" style="left:2169.12px;top:1217px;width:14.78px;height:30px;background:#1e1e1e"></div>
<div class="abs" style="left:1596.20px;top:1217px;width:43.34px;height:30px;background:#1e1e1e"></div>
<div class="abs" style="left:2183.40px;top:1217px;width:14.78px;height:30px;background:#1e1e1e"></div>
<div class="abs" style="left:1639.04px;top:1217px;width:43.34px;height:30px;background:#1e1e1e"></div>
<div class="abs" style="left:2197.68px;top:1217px;width:14.78px;height:30px;background:#1e1e1e"></div>
<div class="abs" style="left:1681.88px;top:1217px;width:57.62px;height:30px;background:#1e1e1e"></div>
<div class="abs" style="left:2211.96px;top:1217px;width:29.06px;height:30px;background:#1e1e1e"></div>
<div class="abs" style="left:1739.00px;top:1217px;width:43.34px;height:30px;background:#1e1e1e"></div>
<div class="abs" style="left:2240.52px;top:1217px;width:14.78px;height:30px;background:#1e1e1e"></div>
<div class="abs" style="left:1781.84px;top:1217px;width:43.34px;height:30px;background:#1e1e1e"></div>
<div class="abs" style="left:2254.80px;top:1217px;width:14.78px;height:30px;background:#1e1e1e"></div>
<div class="abs" style="left:1824.68px;top:1217px;width:43.34px;height:30px;background:#1e1e1e"></div>
<div class="abs" style="left:2269.08px;top:1217px;width:14.78px;height:30px;background:#1e1e1e"></div>
<div class="abs" style="left:1867.52px;top:1217px;width:43.34px;height:30px;background:#1e1e1e"></div>
<div class="abs" style="left:2283.36px;top:1217px;width:14.78px;height:30px;background:#1e1e1e"></div>
<div class="abs" style="left:1910.36px;top:1217px;width:43.34px;height:30px;background:#1e1e1e"></div>
<div class="abs" style="left:2297.64px;top:1217px;width:14.78px;height:30px;background:#1e1e1e"></div>
<div class="abs" style="left:1953.20px;top:1217px;width:43.34px;height:30px;background:#1e1e1e"></div>
<div class="abs" style="left:2311.92px;top:1217px;width:14.78px;height:30px;background:#1e1e1e"></div>
<div class="abs" style="left:1996.04px;top:1217px;width:43.34px;height:30px;background:#1e1e1e"></div>
<div class="abs" style="left:2326.20px;top:1217px;width:14.78px;height:30px;background:#1e1e1e"></div>
<div class="abs" style="left:2038.88px;top:1217px;width:30.56px;height:30px;background:#1e1e1e"></div>
<div class="abs" style="left:2340.48px;top:1217px;width:15.78px;height:30px;background:#1e1e1e"></div>
<div class="m" style="left:1383px;top:1219px;line-height:32px;color:#fff">0b 00 02 01 00 00 0a 00  08 00 06 00 17 00 18 00</div>
<div class="m" style="left:2113px;top:1219px;line-height:32px;color:#fff"><span class="d"></span><span class="d"></span><span class="d"></span><span class="d"></span><span class="d"></span><span class="d"></span><span class="d"></span><span class="d"></span> <span class="d"></span><span class="d"></span><span class="d"></span><span class="d"></span><span class="d"></span><span class="d"></span><span class="d"></span><span class="d"></span></div>
<div class="m" style="left:1298px;top:1249px;line-height:32px;color:#8c8c8c">0110</div>
<div class="abs" style="left:1382.00px;top:1247px;width:30.56px;height:30px;background:#1e1e1e"></div>
<div class="abs" style="left:2112.00px;top:1247px;width:15.78px;height:30px;background:#1e1e1e"></div>
<div class="m" style="left:1383px;top:1249px;line-height:32px;color:#fff">19</div>
<div class="m" style="left:2113px;top:1249px;line-height:32px;color:#fff"><span class="d"></span></div>
<div class="abs" style="left:2530px;top:767px;width:27px;height:531px;background:#1e1e1e"></div>
<div class="abs" style="left:2530px;top:767px;width:27px;height:26px;background:#474747;border:2px solid #555"></div>
<svg class="abs" style="left:2536px;top:776px" width="15" height="8" viewBox="0 0 15 8"><path d="M0 8 L7.5 0 L15 8Z" fill="#c8c8c8"/></svg>
<div class="abs" style="left:2530px;top:794px;width:27px;height:477px;background:#444;border:1px solid #4c4c4c"></div>
<div class="abs" style="left:2530px;top:838px;width:27px;height:432px;background:#4a4a4a;border:2px solid #5c5c5c;box-shadow:0 0 0 1px #1e1e1e"></div>
<div class="abs" style="left:2530px;top:1271px;width:27px;height:27px;background:#474747;border:2px solid #555"></div>
<svg class="abs" style="left:2536px;top:1280px" width="15" height="8" viewBox="0 0 15 8"><path d="M0 0 L15 0 L7.5 8Z" fill="#c8c8c8"/></svg>
<div class="abs" style="left:0;top:1298px;width:2559px;height:50px;background:#202020"></div>
<div class="abs" style="left:0;top:1344px;width:2559px;height:4px;background:#3a3a3a"></div>
<svg class="abs" style="left:19px;top:1308px" width="30" height="30" viewBox="0 0 30 30"><defs><radialGradient id="gc" cx="0.5" cy="0.35" r="0.7"><stop offset="0" stop-color="#b8eef2"/><stop offset="1" stop-color="#7fd0da"/></radialGradient></defs><circle cx="15" cy="15" r="13" fill="url(#gc)" stroke="#3f6f72" stroke-width="1.5"/></svg>
<svg class="abs" style="left:66px;top:1308px" width="30" height="30" viewBox="0 0 30 30"><path d="M1 1 H15 L20 6 V28 H1 Z" fill="#ececec"/><rect x="1" y="1" width="16" height="6" fill="#3a9fde"/><path d="M10 22 L24 6 L28 9 L14 25 L8 27Z" fill="#555"/><path d="M8 27 L10 22 L14 25Z" fill="#000"/></svg>
<div class="s" style="left:126px;top:1311px;line-height:32px;color:#fff;letter-spacing:0.25px">List of cipher suites supported by client (tls.handshake.ciphersuites), 42 bytes</div>
<div class="abs" style="left:1663px;top:1306px;width:1px;height:36px;background:#333"></div>
<div class="abs" style="left:1670px;top:1306px;width:1px;height:36px;background:#333"></div>
<div class="s" style="left:1694px;top:1311px;line-height:32px;color:#fff;letter-spacing:-0.1px">Packets: 18 · Comments: 4</div>
<div class="abs" style="left:2366px;top:1306px;width:1px;height:36px;background:#333"></div>
<div class="abs" style="left:2373px;top:1306px;width:1px;height:36px;background:#333"></div>
<div class="s" style="left:2397px;top:1311px;line-height:32px;color:#fff;letter-spacing:0.25px">Profile: Default</div>
</body></html>
